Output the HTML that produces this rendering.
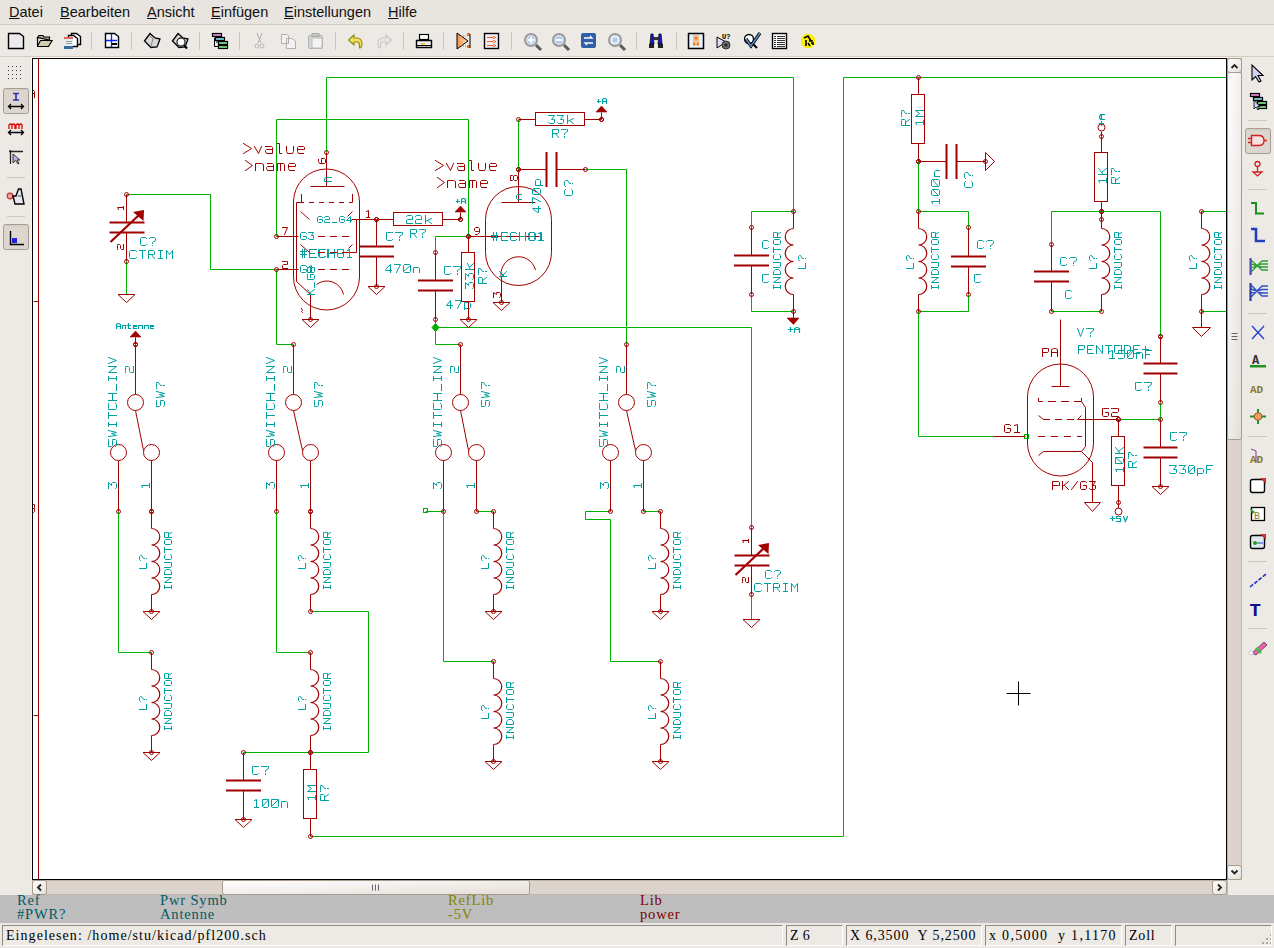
<!DOCTYPE html>
<html><head><meta charset="utf-8">
<style>
*{margin:0;padding:0;box-sizing:border-box}
html,body{width:1274px;height:948px;overflow:hidden;background:#EDEAE6;font-family:"Liberation Sans",sans-serif;position:relative}
.abs{position:absolute}
#menubar{left:0;top:0;width:1274px;height:24px;background:#E8E4DF}
#menubar span{position:absolute;top:4px;line-height:17px;font-size:14.5px;color:#101010;white-space:pre}
#menubar u{text-decoration:underline;text-underline-offset:1px;text-decoration-thickness:1px}
#canvas{left:32px;top:58px;width:1195px;height:822px;background:#fff;border:1px solid #000}
#info{left:0;top:895px;width:1274px;height:28px;background:#BEBEBE;font-family:"Liberation Serif",serif;font-size:14.5px;line-height:14px;letter-spacing:0.85px}
#info div{position:absolute;white-space:pre}
#status{left:0;top:923px;width:1274px;height:25px;background:transparent;font-family:"Liberation Serif",serif;font-size:14px;color:#000;letter-spacing:1.05px}
.fld{position:absolute;top:2px;height:21px;border-top:1px solid #8F8A84;border-left:1px solid #8F8A84;border-right:1px solid #fff;border-bottom:1px solid #fff;padding-left:3px;line-height:20px;white-space:pre;overflow:hidden}
svg text{font-family:"Liberation Mono",monospace}
</style></head><body>
<div id="menubar" class="abs">
<span style="left:9px"><u>D</u>atei</span>
<span style="left:60px"><u>B</u>earbeiten</span>
<span style="left:147px"><u>A</u>nsicht</span>
<span style="left:211px"><u>E</u>infügen</span>
<span style="left:284px"><u>E</u>instellungen</span>
<span style="left:388px"><u>H</u>ilfe</span>
</div>
<div id="canvas" class="abs"></div>
<svg class="abs" style="left:0;top:0" width="1274" height="948" viewBox="0 0 1274 948">
<defs><clipPath id="cv"><rect x="33" y="59" width="1193" height="820"/></clipPath></defs>
<rect x="0" y="24" width="1274" height="1" fill="#D3CAC1"/>
<rect x="0" y="56" width="1274" height="1" fill="#D6CDC4"/>
<rect x="31" y="57" width="1197" height="1" fill="#FAF7F2"/><rect x="31" y="57" width="1" height="824" fill="#FAF7F2"/>
<path d="M8.5,33.5 H19.5 L23.5,36.5 V48.5 H8.5 Z" fill="#EBEBEB" stroke="#000" stroke-width="1.4"/>
<path d="M37.5,37.5 L39,35.5 H43 L44,37 H49.5 V40 Z" fill="#A9AE90" stroke="#000" stroke-width="1.2"/>
<path d="M37.5,37.5 V46.5 H48.5 L52,40.5 H40.5 L37.5,46" fill="#CDD1AC" stroke="#000" stroke-width="1.2"/>
<path d="M71.5,33.5 H76.5 L80.5,36.5 V44.5 H71.5 Z" fill="#fff" stroke="#000" stroke-width="1.4"/>
<path d="M68.5,35.5 H73.5 L77.5,38.5 V46.5 H68.5 Z" fill="#fff" stroke="#000" stroke-width="1.4"/>
<rect x="64" y="37" width="9" height="12" fill="#E9EEF5"/><rect x="64" y="37" width="9" height="2" fill="#E06a5a"/><rect x="64" y="46" width="9" height="3" fill="#3a6a9a"/><rect x="66" y="41" width="6" height="1" fill="#999"/><rect x="66" y="43" width="6" height="1" fill="#999"/>
<rect x="91" y="32" width="1" height="18" fill="#CFC6BC"/>
<path d="M105.5,33.5 H114.5 L118.5,36.5 V47.5 H105.5 Z" fill="#fff" stroke="#000" stroke-width="1.4"/>
<path d="M106,40.5 H117 M111.5,34 V47" stroke="#0022ff" stroke-width="1.3"/><rect x="112" y="43" width="5" height="2" fill="#000"/>
<rect x="131" y="32" width="1" height="18" fill="#CFC6BC"/>
<path d="M144.5,41 L150,33.5 L155,38 L160,39 L157,47 L151,47.5 Z" fill="#D8D8D8" stroke="#000" stroke-width="1.3"/>
<path d="M150,36 L153,39 L151,46" stroke="#888" fill="none"/>
<path d="M172.5,41 L178,33.5 L183,38 L188,39 L185,47 L179,47.5 Z" fill="#D8D8D8" stroke="#000" stroke-width="1.3"/>
<line x1="183" y1="44" x2="187" y2="48.5" stroke="#000" stroke-width="2.2"/><circle cx="181" cy="42" r="4" fill="#fff" stroke="#333" stroke-width="1.3"/>
<rect x="199" y="32" width="1" height="18" fill="#CFC6BC"/>
<path d="M214.5,38 V46.5 H219 M216,42 H219" stroke="#000" fill="none"/>
<rect x="212.5" y="33.5" width="9" height="3" fill="#E08AD8" stroke="#000" stroke-width="1.2"/>
<rect x="215.5" y="37.5" width="9" height="3" fill="#7FCFD8" stroke="#000" stroke-width="1.2"/>
<rect x="218.5" y="41.5" width="9" height="3" fill="#7ED67E" stroke="#000" stroke-width="1.2"/>
<rect x="218.5" y="45.5" width="9" height="3" fill="#7ED67E" stroke="#000" stroke-width="1.2"/>
<rect x="239" y="32" width="1" height="18" fill="#CFC6BC"/>
<path d="M257,33 L261,43 M262,33 L258,43" stroke="#B8B8B8" stroke-width="1.1"/><circle cx="257" cy="46" r="2" fill="none" stroke="#B8B8B8"/><circle cx="262" cy="46" r="2" fill="none" stroke="#B8B8B8"/>
<path d="M281.5,34.5 H287 L288.5,36 V43.5 H281.5 Z M286.5,38.5 H292 L295.5,41 V48.5 H286.5 Z" fill="#F2F2F2" stroke="#B0B0B0"/>
<rect x="308.5" y="35.5" width="14" height="13" rx="1" fill="#D5D5D5" stroke="#B0B0B0"/><rect x="312" y="38" width="10" height="10" fill="#F4F4F4" stroke="#BDBDBD"/><rect x="312" y="33.5" width="7" height="3" fill="#C8C8C8" stroke="#AAA"/>
<rect x="335" y="32" width="1" height="18" fill="#CFC6BC"/>
<path d="M354,35 L348.5,40 L354,45 V42 H357 Q359.5,42 359.5,45 V48 Q362,48 362,44 Q362,38 357,38 H354 Z" fill="#F2E05A" stroke="#8E8A10" stroke-width="1.1"/>
<path d="M386,35 L391.5,40 L386,45 V42 H383 Q380.5,42 380.5,45 V48 Q378,48 378,44 Q378,38 383,38 H386 Z" fill="#E6E6E6" stroke="#C8C8C8" stroke-width="1.1"/>
<rect x="403" y="32" width="1" height="18" fill="#CFC6BC"/>
<rect x="419.5" y="34.5" width="9" height="5" fill="#fff" stroke="#000" stroke-width="1.2"/><path d="M416.5,40.5 H431.5 V47.5 H416.5 Z" fill="#EEE" stroke="#000" stroke-width="1.4"/><rect x="421" y="43" width="4" height="1.5" fill="#ddd000"/><line x1="417" y1="45.5" x2="431" y2="45.5" stroke="#000"/>
<rect x="443" y="32" width="1" height="18" fill="#CFC6BC"/>
<defs><linearGradient id="og" x1="0" x2="1"><stop offset="0" stop-color="#F59040"/><stop offset="1" stop-color="#FFE0C0"/></linearGradient></defs>
<path d="M457,33 L468,41 L457,49 Z" fill="url(#og)" stroke="#000" stroke-width="1"/>
<rect x="467" y="33" width="3" height="3" fill="#F07020"/><rect x="467" y="45" width="3" height="3" fill="#F07020"/><path d="M470,34 V48" stroke="#000" stroke-width="1"/><path d="M461,36 H467 M461,46 H467" stroke="#F07020" stroke-dasharray="1,1"/>
<rect x="484.5" y="33.5" width="14" height="15" fill="#F4EEF8" stroke="#000" stroke-width="1.4"/>
<path d="M487,37.5 H496" stroke="#F06020" stroke-width="1"/><circle cx="494" cy="37.5" r="1.1" fill="#fff" stroke="#F06020" stroke-width="0.8"/>
<path d="M487,41.5 H496" stroke="#F06020" stroke-width="1"/><circle cx="494" cy="41.5" r="1.1" fill="#fff" stroke="#F06020" stroke-width="0.8"/>
<path d="M487,45.5 H496" stroke="#F06020" stroke-width="1"/><circle cx="494" cy="45.5" r="1.1" fill="#fff" stroke="#F06020" stroke-width="0.8"/>
<rect x="511" y="32" width="1" height="18" fill="#CFC6BC"/>
<line x1="536" y1="45" x2="541" y2="50" stroke="#5a5a5a" stroke-width="3"/>
<circle cx="531" cy="40" r="6" fill="#D5E2F2" stroke="#9a9a9a" stroke-width="2"/>
<circle cx="531" cy="40" r="3.5" fill="#B4C9EA"/>
<path d="M528,40 H534 M531,37 V43" stroke="#fff" stroke-width="2"/>
<line x1="564" y1="45" x2="569" y2="50" stroke="#5a5a5a" stroke-width="3"/>
<circle cx="559" cy="40" r="6" fill="#D5E2F2" stroke="#9a9a9a" stroke-width="2"/>
<circle cx="559" cy="40" r="3.5" fill="#B4C9EA"/>
<path d="M556,40 H562" stroke="#fff" stroke-width="2"/>
<rect x="581" y="33" width="15" height="15" rx="2" fill="#2F5FA8"/><path d="M584,38 H592 L590,36 M593,43 H585 L587,45" stroke="#fff" stroke-width="1.3" fill="none"/>
<line x1="620" y1="45" x2="625" y2="50" stroke="#5a5a5a" stroke-width="3"/>
<circle cx="615" cy="40" r="6" fill="#D5E2F2" stroke="#9a9a9a" stroke-width="2"/>
<circle cx="615" cy="40" r="3.5" fill="#B4C9EA"/>
<rect x="612" y="37" width="6" height="6" fill="none" stroke="#fff" stroke-width="1"/>
<rect x="636" y="32" width="1" height="18" fill="#CFC6BC"/>
<rect x="649" y="44" width="5" height="4" fill="#222"/><rect x="658" y="44" width="5" height="4" fill="#222"/><path d="M650,44 L651,34 H653 L654,44 Z M658,44 L659,34 H661 L662,44 Z" fill="#1a1aD0" stroke="#000" stroke-width="0.8"/><rect x="654" y="37" width="4" height="3" fill="#333"/>
<rect x="676" y="32" width="1" height="18" fill="#CFC6BC"/>
<rect x="688.5" y="33.5" width="15" height="15" fill="#E4F0FA" stroke="#000" stroke-width="1.5"/><rect x="693" y="35" width="6" height="11" fill="#F5C090"/><circle cx="696" cy="38" r="1.5" fill="#F07020"/><circle cx="694" cy="44" r="1.2" fill="#F07020"/><circle cx="698" cy="44" r="1.2" fill="#F07020"/>
<path d="M717,37 L726,42 L717,48 Z" fill="#DCDCF8" stroke="#000" stroke-width="1"/><circle cx="726" cy="45" r="4" fill="#6a6a6a" stroke="#333"/><circle cx="726" cy="45" r="1.5" fill="#222"/><text x="722" y="39" font-size="7" font-family="Liberation Sans" font-weight="bold" fill="#000">U?</text>
<circle cx="749" cy="39" r="4.5" fill="#fff" stroke="#000" stroke-width="1.3"/><path d="M746,39 L751,46 L760,33" stroke="#000" stroke-width="3.2" fill="none"/><path d="M746,39 L751,46 L760,33" stroke="#5A8AD0" stroke-width="1.6" fill="none"/><line x1="753" y1="44" x2="757" y2="48" stroke="#000" stroke-width="2"/>
<rect x="772.5" y="33.5" width="14" height="15" fill="#fff" stroke="#000" stroke-width="1.4"/>
<path d="M774,36.5 H776 M777,36.5 H785" stroke="#000" stroke-width="0.8"/>
<path d="M774,38.5 H776 M777,38.5 H785" stroke="#000" stroke-width="0.8"/>
<path d="M774,40.5 H776 M777,40.5 H785" stroke="#000" stroke-width="0.8"/>
<path d="M774,42.5 H776 M777,42.5 H785" stroke="#000" stroke-width="0.8"/>
<path d="M774,44.5 H776 M777,44.5 H785" stroke="#000" stroke-width="0.8"/>
<path d="M774,46.5 H776 M777,46.5 H785" stroke="#000" stroke-width="0.8"/>
<path d="M805,34 H811 L815,38 V44 L811,48 H805 L801,44 V38 Z" fill="#FFF000"/><path d="M804,38 L808,36 L811,41 M806,40 V46 M808,43 L810,46 M809,41 L813,41 M811,43 H813 V45" stroke="#000" stroke-width="1.6" fill="none"/>
<rect x="8" y="66" width="1" height="1" fill="#404040"/>
<rect x="12" y="66" width="1" height="1" fill="#404040"/>
<rect x="16" y="66" width="1" height="1" fill="#404040"/>
<rect x="20" y="66" width="1" height="1" fill="#404040"/>
<rect x="8" y="70" width="1" height="1" fill="#404040"/>
<rect x="12" y="70" width="1" height="1" fill="#404040"/>
<rect x="16" y="70" width="1" height="1" fill="#404040"/>
<rect x="20" y="70" width="1" height="1" fill="#404040"/>
<rect x="8" y="74" width="1" height="1" fill="#404040"/>
<rect x="12" y="74" width="1" height="1" fill="#404040"/>
<rect x="16" y="74" width="1" height="1" fill="#404040"/>
<rect x="20" y="74" width="1" height="1" fill="#404040"/>
<rect x="8" y="78" width="1" height="1" fill="#404040"/>
<rect x="12" y="78" width="1" height="1" fill="#404040"/>
<rect x="16" y="78" width="1" height="1" fill="#404040"/>
<rect x="20" y="78" width="1" height="1" fill="#404040"/>
<rect x="3.5" y="88.5" width="25" height="25" rx="2" fill="#DCD6CF" stroke="#A59C92"/>
<rect x="4.5" y="89.5" width="23" height="1" fill="#CFC8C0"/>
<path d="M13,93.5 H19 M16,93.5 V100 M13,100 H19" stroke="#3030B0" stroke-width="1.6"/><path d="M9,106.5 H23 M11,104 L8.5,106.5 L11,109 M21,104 L23.5,106.5 L21,109" stroke="#000" stroke-width="1.3" fill="none"/>
<path d="M9,129 V125 Q11,123 12,125 V129 M12,125 Q14,123 15,125 V129 M16,129 V125 Q18,123 19,125 V129 M19,125 Q21,123 22,125 V129" stroke="#E00000" stroke-width="1.3" fill="none"/><path d="M9,132.5 H23 M11,130 L8.5,132.5 L11,135 M21,130 L23.5,132.5 L21,135" stroke="#000" stroke-width="1.3" fill="none"/>
<path d="M9,151.5 H23 M10.5,150 V164" stroke="#222" stroke-width="1.3"/><path d="M13,154 L13,163 L15.5,160.5 L18,164 L19,163.5 L17,160 L20,160 Z" fill="#B8B8E8" stroke="#222" stroke-width="0.9"/>
<rect x="7" y="177" width="18" height="1" fill="#CFC6BC"/>
<circle cx="10" cy="196" r="2.8" fill="#F4A0A0" stroke="#C03030" stroke-width="1.2"/><path d="M13,196 H16 L18.5,189 H21 L24,204 H15 Z" fill="#E8E8F0" stroke="#000" stroke-width="1.4"/><path d="M18,196 L21,196" stroke="#444"/>
<rect x="7" y="216" width="18" height="1" fill="#CFC6BC"/>
<rect x="3.5" y="224.5" width="25" height="25" rx="2" fill="#DCD6CF" stroke="#A59C92"/>
<rect x="4.5" y="225.5" width="23" height="1" fill="#CFC8C0"/>
<path d="M10.5,231 V244.5 H24" stroke="#000" stroke-width="1.4" fill="none"/><rect x="12" y="238" width="5" height="5" fill="#2020E0"/>
<path d="M1252,65 L1252,80 L1255.5,76.5 L1259,82 L1261,81 L1258,75.5 L1263,75.5 Z" fill="#D0D0F8" stroke="#000" stroke-width="1.1"/>
<rect x="1250.5" y="93.5" width="9" height="3" fill="#E08AD8" stroke="#000" stroke-width="1.2"/>
<rect x="1253.5" y="97.5" width="9" height="3" fill="#7FCFD8" stroke="#000" stroke-width="1.2"/>
<rect x="1257.5" y="101.5" width="9" height="3" fill="#7ED67E" stroke="#000" stroke-width="1.2"/>
<rect x="1257.5" y="105.5" width="9" height="3" fill="#7ED67E" stroke="#000" stroke-width="1.2"/>
<path d="M1254,100 L1254,109 L1256,107 L1258,110 L1259,109 L1257.5,106.5 L1260,106.5 Z" fill="#D0D0F8" stroke="#000" stroke-width="0.8"/>
<rect x="1248" y="120" width="19" height="1" fill="#CFC6BC"/>
<rect x="1245.5" y="128.5" width="25" height="25" rx="2" fill="#DCD6CF" stroke="#A59C92"/>
<rect x="1246.5" y="129.5" width="23" height="1" fill="#CFC8C0"/>
<path d="M1251.5,135.5 H1259 Q1264,135.5 1264,140.5 Q1264,145.5 1259,145.5 H1251.5 Z M1248,138.5 H1251.5 M1248,142.5 H1251.5 M1264,140.5 H1267" stroke="#D02020" stroke-width="1.4" fill="#F8E0E0"/>
<circle cx="1257.5" cy="164" r="2.5" fill="none" stroke="#D02020" stroke-width="1.3"/><path d="M1257.5,166.5 V172 M1253,172 H1262 L1257.5,176 Z" stroke="#D02020" stroke-width="1.3" fill="none"/>
<rect x="1248" y="189" width="19" height="1" fill="#CFC6BC"/>
<path d="M1251,203 H1256 V213.5 H1264" stroke="#189018" stroke-width="2" fill="none"/>
<path d="M1251,229 H1256 V241 H1265" stroke="#2040C0" stroke-width="2.6" fill="none"/>
<path d="M1251,260 V274 M1251,272 L1262,261 H1268 M1251,268 L1262,264 H1268 M1251,264 L1262,267 H1268 M1251,260 L1262,270 H1268" stroke="#30A030" stroke-width="1.3" fill="none"/><path d="M1250.5,258 V275" stroke="#5050C0" stroke-width="2.2"/>
<path d="M1251,297 L1262,286 H1268 M1251,293 L1262,289.5 H1268 M1251,289 L1262,293 H1268 M1251,285 L1262,296 H1268" stroke="#3050C8" stroke-width="1.5" fill="none"/><path d="M1250.5,283 V301" stroke="#3040A0" stroke-width="2.2"/>
<rect x="1248" y="313" width="19" height="1" fill="#CFC6BC"/>
<path d="M1252,326 L1264,339 M1264,326 L1252,339" stroke="#2040D0" stroke-width="1.3"/>
<text x="1252" y="364" font-size="12" font-weight="bold" font-family="Liberation Sans" fill="#303030">A</text><rect x="1250" y="365" width="16" height="2.5" fill="#209020"/>
<text x="1250" y="393" font-size="11" font-weight="bold" font-family="Liberation Sans" fill="#8A7A30">AD</text>
<path d="M1258,409 V424 M1250,416.5 H1266" stroke="#209020" stroke-width="2"/><circle cx="1258" cy="416.5" r="3.8" fill="#F0A060" stroke="#A05020"/>
<rect x="1248" y="436" width="19" height="1" fill="#CFC6BC"/>
<text x="1250" y="463" font-size="11" font-weight="bold" font-family="Liberation Sans" fill="#8A7A30">AD</text><path d="M1251,449 L1256,451 L1256,462" stroke="#9030A0" fill="none"/>
<rect x="1250.5" y="479.5" width="14" height="13" rx="2" fill="#fff" stroke="#000" stroke-width="1.4"/><path d="M1260,478 L1266,478 L1266,484 Z" fill="#D03030"/>
<rect x="1251.5" y="507.5" width="13" height="13" fill="#fff" stroke="#000" stroke-width="1.3"/><text x="1254" y="519" font-size="10" font-family="Liberation Sans" fill="#8A7A30">B</text><path d="M1250,508 L1255,512 L1252,514 Z" fill="#20A020"/>
<rect x="1250.5" y="535.5" width="14" height="13" rx="2" fill="#E0E8F0" stroke="#000" stroke-width="1.4"/><circle cx="1255" cy="543" r="2" fill="#20A020"/><path d="M1257,543 H1263" stroke="#2040D0"/><path d="M1260,534 L1266,534 L1266,540 Z" fill="#D03030"/>
<rect x="1248" y="561" width="19" height="1" fill="#CFC6BC"/>
<path d="M1250,587 L1266,574" stroke="#2030C0" stroke-width="1.6" stroke-dasharray="4,1.5"/>
<text x="1249.5" y="616" font-size="19" font-weight="bold" font-family="Liberation Serif" fill="#10108A">T</text>
<rect x="1248" y="628" width="19" height="1" fill="#CFC6BC"/>
<path d="M1252,653 L1264,642 L1267,645 L1256,655 Z" fill="#F060B0" stroke="#444" stroke-width="0.8"/><path d="M1256,648 L1261,653" stroke="#40C040" stroke-width="2.5"/><circle cx="1251" cy="653" r="2" fill="#fff" stroke="#ccc"/>
<defs><linearGradient id="vb" x1="0" y1="0" x2="1" y2="1"><stop offset="0" stop-color="#FFFFFF"/><stop offset="1" stop-color="#E4DED8"/></linearGradient></defs>
<rect x="1227.5" y="58.5" width="14" height="821" fill="#DCD4CC" stroke="#C2B6AA"/>
<rect x="1227.5" y="72.5" width="14" height="367" rx="2" fill="url(#vb)" stroke="#A89A8C"/>
<rect x="1227.5" y="58.5" width="14" height="14" rx="2.5" fill="url(#vb)" stroke="#A89A8C"/>
<path d="M1231.5,68 L1234.5,65 L1237.5,68" stroke="#222" stroke-width="1.8" fill="none"/>
<path d="M1231.5,333.5 H1237.5 M1231.5,336.5 H1237.5 M1231.5,339.5 H1237.5" stroke="#666" stroke-width="1"/>
<rect x="1227.5" y="865.5" width="14" height="14" rx="2.5" fill="url(#vb)" stroke="#A89A8C"/>
<path d="M1231.5,870.5 L1234.5,873.5 L1237.5,870.5" stroke="#222" stroke-width="1.8" fill="none"/>
<rect x="32.5" y="880.5" width="1195" height="14" fill="#DCD4CC" stroke="#C2B6AA"/>
<rect x="32.5" y="880.5" width="14" height="14" rx="2.5" fill="url(#vb)" stroke="#A89A8C"/>
<path d="M41,884.5 L38,887.5 L41,890.5" stroke="#222" stroke-width="1.8" fill="none"/>
<rect x="222.5" y="880.5" width="307" height="14" rx="2" fill="url(#vb)" stroke="#A89A8C"/>
<path d="M372.5,884.5 V890.5 M375.5,884.5 V890.5 M378.5,884.5 V890.5" stroke="#666"/>
<rect x="1212.5" y="880.5" width="14" height="14" rx="2.5" fill="url(#vb)" stroke="#A89A8C"/>
<path d="M1218,884.5 L1221,887.5 L1218,890.5" stroke="#222" stroke-width="1.8" fill="none"/>
<rect x="1270" y="934" width="2" height="2" fill="#B0A89F"/>
<rect x="1266" y="938" width="2" height="2" fill="#B0A89F"/>
<rect x="1270" y="938" width="2" height="2" fill="#B0A89F"/>
<rect x="1262" y="942" width="2" height="2" fill="#B0A89F"/>
<rect x="1266" y="942" width="2" height="2" fill="#B0A89F"/>
<rect x="1270" y="942" width="2" height="2" fill="#B0A89F"/>
<g clip-path="url(#cv)">
<line x1="38.5" y1="58.5" x2="38.5" y2="879.5" stroke="#A00000" stroke-width="1"/>
<line x1="33.5" y1="301.5" x2="38.5" y2="301.5" stroke="#A00000" stroke-width="1"/>
<line x1="33.5" y1="715.5" x2="38.5" y2="715.5" stroke="#A00000" stroke-width="1"/>
<path d="M28.5,97.5 L28.5,91.5 L30.5,89.5 L32.5,89.5 L34.5,91.5 L34.5,97.5 M28.5,93.5 L34.5,93.5" stroke="#A00000" stroke-width="1" fill="none" stroke-linecap="square" stroke-linejoin="miter"/>
<path d="M28.5,512.5 L28.5,504.5 L33.5,504.5 L34.5,504.5 L34.5,507.5 L33.5,508.5 L28.5,508.5 M33.5,508.5 L34.5,508.5 L34.5,511.5 L33.5,512.5 L28.5,512.5" stroke="#A00000" stroke-width="1" fill="none" stroke-linecap="square" stroke-linejoin="miter"/>
<path d="M326.5,152.5 L326.5,77.5 L793.5,77.5 L793.5,211.5 L751.5,211.5 L751.5,227.5" stroke="#00B000" stroke-width="1" fill="none"/>
<path d="M468.5,236.5 L468.5,119.5 L276.5,119.5 L276.5,236.5" stroke="#00B000" stroke-width="1" fill="none"/>
<path d="M276.5,269.5 L276.5,344.5 L293.5,344.5" stroke="#00B000" stroke-width="1" fill="none"/>
<path d="M126.5,194.5 L210.5,194.5 L210.5,269.5 L276.5,269.5" stroke="#00B000" stroke-width="1" fill="none"/>
<path d="M126.5,261.5 L126.5,294.5" stroke="#00B000" stroke-width="1" fill="none"/>
<path d="M468.5,236.5 L435.5,236.5 L435.5,252.5" stroke="#00B000" stroke-width="1" fill="none"/>
<path d="M518.5,119.5 L518.5,169.5" stroke="#00B000" stroke-width="1" fill="none"/>
<path d="M585.5,169.5 L626.5,169.5 L626.5,344.5" stroke="#00B000" stroke-width="1" fill="none"/>
<path d="M435.5,319.5 L435.5,344.5 L460.5,344.5" stroke="#00B000" stroke-width="1" fill="none"/>
<path d="M435.5,327.5 L751.5,327.5 L751.5,527.5" stroke="#00B000" stroke-width="1" fill="none"/>
<path d="M751.5,594.5 L751.5,619.5" stroke="#00B000" stroke-width="1" fill="none"/>
<path d="M1226.5,77.5 L843.5,77.5 L843.5,836.5 L310.5,836.5" stroke="#00B000" stroke-width="1" fill="none"/>
<path d="M918.5,161.5 L918.5,211.5 L968.5,211.5 L968.5,227.5" stroke="#00B000" stroke-width="1" fill="none"/>
<path d="M751.5,294.5 L751.5,311.5 L793.5,311.5" stroke="#00B000" stroke-width="1" fill="none"/>
<path d="M968.5,294.5 L968.5,311.5 L918.5,311.5 L918.5,436.5 L993.5,436.5" stroke="#00B000" stroke-width="1" fill="none"/>
<path d="M1051.5,244.5 L1051.5,211.5 L1160.5,211.5 L1160.5,336.5" stroke="#00B000" stroke-width="1" fill="none"/>
<path d="M1051.5,311.5 L1101.5,311.5" stroke="#00B000" stroke-width="1" fill="none"/>
<path d="M1201.5,211.5 L1226.5,211.5" stroke="#00B000" stroke-width="1" fill="none"/>
<path d="M1201.5,311.5 L1226.5,311.5" stroke="#00B000" stroke-width="1" fill="none"/>
<path d="M1160.5,402.5 L1160.5,419.5" stroke="#00B000" stroke-width="1" fill="none"/>
<path d="M1118.5,419.5 L1160.5,419.5" stroke="#00B000" stroke-width="1" fill="none"/>
<path d="M118.5,511.5 L118.5,652.5 L151.5,652.5" stroke="#00B000" stroke-width="1" fill="none"/>
<path d="M276.5,511.5 L276.5,652.5 L310.5,652.5" stroke="#00B000" stroke-width="1" fill="none"/>
<path d="M310.5,611.5 L368.5,611.5 L368.5,752.5 L243.5,752.5" stroke="#00B000" stroke-width="1" fill="none"/>
<path d="M425.5,511.5 L443.5,511.5 L443.5,661.5 L493.5,661.5" stroke="#00B000" stroke-width="1" fill="none"/>
<path d="M476.5,511.5 L493.5,511.5" stroke="#00B000" stroke-width="1" fill="none"/>
<path d="M610.5,511.5 L585.5,511.5 L585.5,519.5 L610.5,519.5 L610.5,661.5 L660.5,661.5" stroke="#00B000" stroke-width="1" fill="none"/>
<path d="M643.5,511.5 L660.5,511.5" stroke="#00B000" stroke-width="1" fill="none"/>
<rect x="423.5" y="508.5" width="4" height="4" stroke="#00B000" fill="none"/>
<rect x="1024.5" y="434.5" width="4" height="4" stroke="#00B000" fill="none"/>
<path d="M435.5,323.5 L439,327.5 L435.5,331.5 L432,327.5 Z" fill="#00B000" stroke="#00B000"/>
<circle cx="126.5" cy="194.5" r="2.0" stroke="#A00000" stroke-width="1" fill="none"/>
<circle cx="126.5" cy="261.5" r="2.0" stroke="#A00000" stroke-width="1" fill="none"/>
<line x1="126.5" y1="194.5" x2="126.5" y2="222.5" stroke="#A00000" stroke-width="1"/>
<line x1="126.5" y1="232.5" x2="126.5" y2="261.5" stroke="#A00000" stroke-width="1"/>
<rect x="109.5" y="221.5" width="35" height="2" fill="#A00000"/>
<rect x="109.5" y="231.5" width="35" height="2" fill="#A00000"/>
<line x1="110.5" y1="242" x2="139" y2="215" stroke="#A00000" stroke-width="2.2"/>
<path d="M144,210 L143.5,221 L133,212 Z" fill="#A00000"/>
<path d="M118.5,209.5 L117.5,207.5 L123.5,207.5 M123.5,209.5 L123.5,206.5" stroke="#A00000" stroke-width="1" fill="none" stroke-linecap="square" stroke-linejoin="miter"/>
<path d="M117.5,249.5 L117.5,248.5 L117.5,245.5 L117.5,244.5 L119.5,244.5 L120.5,245.5 L120.5,248.5 L121.5,249.5 L123.5,249.5 L123.5,244.5" stroke="#A00000" stroke-width="1" fill="none" stroke-linecap="square" stroke-linejoin="miter"/>
<path d="M146.5,238.5 L145.5,237.5 L141.5,237.5 L140.5,238.5 L140.5,244.5 L141.5,245.5 L145.5,245.5 L146.5,244.5 M149.5,238.5 L150.5,237.5 L154.5,237.5 L155.5,238.5 L155.5,240.5 L152.5,242.5 L152.5,243.5 M152.5,245.5 L152.5,245.5" stroke="#00A0A0" stroke-width="1" fill="none" stroke-linecap="square" stroke-linejoin="miter"/>
<path d="M136.5,251.5 L135.5,250.5 L130.5,250.5 L129.5,251.5 L129.5,257.5 L130.5,258.5 L135.5,258.5 L136.5,257.5 M139.5,250.5 L145.5,250.5 M142.5,250.5 L142.5,258.5 M148.5,258.5 L148.5,250.5 L153.5,250.5 L154.5,251.5 L154.5,254.5 L153.5,254.5 L148.5,254.5 M151.5,254.5 L154.5,258.5 M158.5,250.5 L162.5,250.5 M160.5,250.5 L160.5,258.5 M158.5,258.5 L162.5,258.5 M166.5,258.5 L166.5,250.5 L169.5,254.5 L172.5,250.5 L172.5,258.5" stroke="#00A0A0" stroke-width="1" fill="none" stroke-linecap="square" stroke-linejoin="miter"/>
<path d="M118.0,294.5 L135.0,294.5 L126.5,302.5 Z" stroke="#A00000" stroke-width="1" fill="none"/>
<circle cx="751.5" cy="527.5" r="2.0" stroke="#A00000" stroke-width="1" fill="none"/>
<circle cx="751.5" cy="594.5" r="2.0" stroke="#A00000" stroke-width="1" fill="none"/>
<line x1="751.5" y1="527.5" x2="751.5" y2="555.5" stroke="#A00000" stroke-width="1"/>
<line x1="751.5" y1="565.5" x2="751.5" y2="594.5" stroke="#A00000" stroke-width="1"/>
<rect x="734.5" y="554.5" width="35" height="2" fill="#A00000"/>
<rect x="734.5" y="564.5" width="35" height="2" fill="#A00000"/>
<line x1="735.5" y1="575" x2="764" y2="548" stroke="#A00000" stroke-width="2.2"/>
<path d="M769,543 L768.5,554 L758,545 Z" fill="#A00000"/>
<path d="M743.5,542.5 L742.5,540.5 L748.5,540.5 M748.5,542.5 L748.5,539.5" stroke="#A00000" stroke-width="1" fill="none" stroke-linecap="square" stroke-linejoin="miter"/>
<path d="M742.5,582.5 L742.5,581.5 L742.5,578.5 L742.5,577.5 L744.5,577.5 L745.5,578.5 L745.5,581.5 L746.5,582.5 L748.5,582.5 L748.5,577.5" stroke="#A00000" stroke-width="1" fill="none" stroke-linecap="square" stroke-linejoin="miter"/>
<path d="M771.5,571.5 L770.5,570.5 L766.5,570.5 L765.5,571.5 L765.5,577.5 L766.5,578.5 L770.5,578.5 L771.5,577.5 M774.5,571.5 L775.5,570.5 L779.5,570.5 L780.5,571.5 L780.5,573.5 L777.5,575.5 L777.5,576.5 M777.5,578.5 L777.5,578.5" stroke="#00A0A0" stroke-width="1" fill="none" stroke-linecap="square" stroke-linejoin="miter"/>
<path d="M761.5,584.5 L760.5,583.5 L755.5,583.5 L754.5,584.5 L754.5,590.5 L755.5,591.5 L760.5,591.5 L761.5,590.5 M764.5,583.5 L770.5,583.5 M767.5,583.5 L767.5,591.5 M773.5,591.5 L773.5,583.5 L778.5,583.5 L779.5,584.5 L779.5,587.5 L778.5,587.5 L773.5,587.5 M776.5,587.5 L779.5,591.5 M783.5,583.5 L787.5,583.5 M785.5,583.5 L785.5,591.5 M783.5,591.5 L787.5,591.5 M791.5,591.5 L791.5,583.5 L794.5,587.5 L797.5,583.5 L797.5,591.5" stroke="#00A0A0" stroke-width="1" fill="none" stroke-linecap="square" stroke-linejoin="miter"/>
<path d="M743.0,619.5 L760.0,619.5 L751.5,627.5 Z" stroke="#A00000" stroke-width="1" fill="none"/>
<circle cx="135.5" cy="344.5" r="2.0" stroke="#A00000" stroke-width="1" fill="none"/>
<line x1="135.5" y1="344.5" x2="135.5" y2="337.5" stroke="#A00000" stroke-width="1"/>
<path d="M135.5,331 L141,337 L130,337 Z" fill="#A00000" stroke="#A00000" stroke-width="0.6"/>
<path d="" stroke="#00A0A0" stroke-width="1.2" fill="none" stroke-linecap="square" stroke-linejoin="miter"/>
<path d="M116.5,328.5 L116.5,324.5 L117.5,323.5 L118.5,323.5 L120.5,324.5 L120.5,328.5 M116.5,326.5 L120.5,326.5 M122.5,328.5 L122.5,325.5 L125.5,325.5 L125.5,325.5 L125.5,328.5 M128.5,323.5 L128.5,328.5 L129.5,328.5 L130.5,328.5 M127.5,325.5 L130.5,325.5 M133.5,326.5 L136.5,326.5 L136.5,325.5 L136.5,325.5 L133.5,325.5 L133.5,325.5 L133.5,328.5 L133.5,328.5 L136.5,328.5 M138.5,328.5 L138.5,325.5 L141.5,325.5 L142.5,325.5 L142.5,328.5 M144.5,328.5 L144.5,325.5 L147.5,325.5 L148.5,325.5 L148.5,328.5 M150.5,326.5 L153.5,326.5 L153.5,325.5 L153.5,325.5 L150.5,325.5 L150.5,325.5 L150.5,328.5 L150.5,328.5 L153.5,328.5" stroke="#00A0A0" stroke-width="1.2" fill="none" stroke-linecap="square" stroke-linejoin="miter"/>
<circle cx="135.5" cy="344.5" r="2.0" stroke="#A00000" stroke-width="1" fill="none"/>
<line x1="135.5" y1="344.5" x2="135.5" y2="394.5" stroke="#A00000" stroke-width="1"/>
<circle cx="135.5" cy="402.5" r="8" stroke="#A00000" stroke-width="1" fill="none"/>
<circle cx="118.5" cy="452.5" r="8" stroke="#A00000" stroke-width="1" fill="none"/>
<circle cx="151.5" cy="452.5" r="8" stroke="#A00000" stroke-width="1" fill="none"/>
<line x1="135.5" y1="410.5" x2="143.5" y2="450.5" stroke="#A00000" stroke-width="1"/>
<line x1="118.5" y1="460.5" x2="118.5" y2="511.5" stroke="#A00000" stroke-width="1"/>
<line x1="151.5" y1="460.5" x2="151.5" y2="511.5" stroke="#A00000" stroke-width="1"/>
<circle cx="118.5" cy="511.5" r="2.0" stroke="#A00000" stroke-width="1" fill="none"/>
<circle cx="151.5" cy="511.5" r="2.0" stroke="#A00000" stroke-width="1" fill="none"/>
<path d="M108.5,439.5 L108.5,440.5 L108.5,445.5 L108.5,446.5 L111.5,446.5 L112.5,445.5 L112.5,440.5 L112.5,439.5 L115.5,439.5 L116.5,440.5 L116.5,445.5 L115.5,446.5 M108.5,436.5 L116.5,435.5 L111.5,433.5 L116.5,432.5 L108.5,430.5 M108.5,426.5 L108.5,422.5 M108.5,424.5 L116.5,424.5 M116.5,426.5 L116.5,422.5 M108.5,418.5 L108.5,412.5 M108.5,415.5 L116.5,415.5 M108.5,403.5 L108.5,404.5 L108.5,408.5 L108.5,409.5 L115.5,409.5 L116.5,408.5 L116.5,404.5 L115.5,403.5 M108.5,400.5 L116.5,400.5 M108.5,393.5 L116.5,393.5 M112.5,400.5 L112.5,393.5 M116.5,390.5 L116.5,384.5 M108.5,380.5 L108.5,376.5 M108.5,378.5 L116.5,378.5 M116.5,380.5 L116.5,376.5 M116.5,372.5 L108.5,372.5 L116.5,366.5 L108.5,366.5 M108.5,363.5 L116.5,360.5 L108.5,357.5" stroke="#00A0A0" stroke-width="1" fill="none" stroke-linecap="square" stroke-linejoin="miter"/>
<path d="M125.5,372.5 L125.5,371.5 L125.5,367.5 L125.5,366.5 L128.5,366.5 L129.5,367.5 L129.5,371.5 L130.5,372.5 L133.5,372.5 L133.5,366.5" stroke="#00A0A0" stroke-width="1" fill="none" stroke-linecap="square" stroke-linejoin="miter"/>
<path d="M156.5,400.5 L156.5,401.5 L156.5,405.5 L156.5,406.5 L159.5,406.5 L160.5,405.5 L160.5,401.5 L160.5,400.5 L163.5,400.5 L164.5,401.5 L164.5,405.5 L163.5,406.5 M156.5,397.5 L164.5,396.5 L159.5,394.5 L164.5,393.5 L156.5,391.5 M156.5,388.5 L156.5,387.5 L156.5,383.5 L156.5,382.5 L158.5,382.5 L160.5,385.5 L161.5,385.5 M163.5,385.5 L164.5,385.5" stroke="#00A0A0" stroke-width="1" fill="none" stroke-linecap="square" stroke-linejoin="miter"/>
<path d="M108.5,488.5 L108.5,482.5 L111.5,485.5 L111.5,483.5 L112.5,482.5 L115.5,482.5 L116.5,483.5 L116.5,487.5 L115.5,488.5" stroke="#00A0A0" stroke-width="1" fill="none" stroke-linecap="square" stroke-linejoin="miter"/>
<path d="M142.5,487.5 L141.5,485.5 L149.5,485.5 M149.5,487.5 L149.5,483.5" stroke="#00A0A0" stroke-width="1" fill="none" stroke-linecap="square" stroke-linejoin="miter"/>
<circle cx="293.5" cy="344.5" r="2.0" stroke="#A00000" stroke-width="1" fill="none"/>
<line x1="293.5" y1="344.5" x2="293.5" y2="394.5" stroke="#A00000" stroke-width="1"/>
<circle cx="293.5" cy="402.5" r="8" stroke="#A00000" stroke-width="1" fill="none"/>
<circle cx="276.5" cy="452.5" r="8" stroke="#A00000" stroke-width="1" fill="none"/>
<circle cx="310.5" cy="452.5" r="8" stroke="#A00000" stroke-width="1" fill="none"/>
<line x1="293.5" y1="410.5" x2="302.5" y2="450.5" stroke="#A00000" stroke-width="1"/>
<line x1="276.5" y1="460.5" x2="276.5" y2="511.5" stroke="#A00000" stroke-width="1"/>
<line x1="310.5" y1="460.5" x2="310.5" y2="511.5" stroke="#A00000" stroke-width="1"/>
<circle cx="276.5" cy="511.5" r="2.0" stroke="#A00000" stroke-width="1" fill="none"/>
<circle cx="310.5" cy="511.5" r="2.0" stroke="#A00000" stroke-width="1" fill="none"/>
<path d="M266.5,439.5 L266.5,440.5 L266.5,445.5 L266.5,446.5 L269.5,446.5 L270.5,445.5 L270.5,440.5 L270.5,439.5 L273.5,439.5 L274.5,440.5 L274.5,445.5 L273.5,446.5 M266.5,436.5 L274.5,435.5 L269.5,433.5 L274.5,432.5 L266.5,430.5 M266.5,426.5 L266.5,422.5 M266.5,424.5 L274.5,424.5 M274.5,426.5 L274.5,422.5 M266.5,418.5 L266.5,412.5 M266.5,415.5 L274.5,415.5 M266.5,403.5 L266.5,404.5 L266.5,408.5 L266.5,409.5 L273.5,409.5 L274.5,408.5 L274.5,404.5 L273.5,403.5 M266.5,400.5 L274.5,400.5 M266.5,393.5 L274.5,393.5 M270.5,400.5 L270.5,393.5 M274.5,390.5 L274.5,384.5 M266.5,380.5 L266.5,376.5 M266.5,378.5 L274.5,378.5 M274.5,380.5 L274.5,376.5 M274.5,372.5 L266.5,372.5 L274.5,366.5 L266.5,366.5 M266.5,363.5 L274.5,360.5 L266.5,357.5" stroke="#00A0A0" stroke-width="1" fill="none" stroke-linecap="square" stroke-linejoin="miter"/>
<path d="M283.5,372.5 L283.5,371.5 L283.5,367.5 L283.5,366.5 L286.5,366.5 L287.5,367.5 L287.5,371.5 L288.5,372.5 L291.5,372.5 L291.5,366.5" stroke="#00A0A0" stroke-width="1" fill="none" stroke-linecap="square" stroke-linejoin="miter"/>
<path d="M314.5,400.5 L314.5,401.5 L314.5,405.5 L314.5,406.5 L317.5,406.5 L318.5,405.5 L318.5,401.5 L318.5,400.5 L321.5,400.5 L322.5,401.5 L322.5,405.5 L321.5,406.5 M314.5,397.5 L322.5,396.5 L317.5,394.5 L322.5,393.5 L314.5,391.5 M314.5,388.5 L314.5,387.5 L314.5,383.5 L314.5,382.5 L316.5,382.5 L318.5,385.5 L319.5,385.5 M321.5,385.5 L322.5,385.5" stroke="#00A0A0" stroke-width="1" fill="none" stroke-linecap="square" stroke-linejoin="miter"/>
<path d="M266.5,488.5 L266.5,482.5 L269.5,485.5 L269.5,483.5 L270.5,482.5 L273.5,482.5 L274.5,483.5 L274.5,487.5 L273.5,488.5" stroke="#00A0A0" stroke-width="1" fill="none" stroke-linecap="square" stroke-linejoin="miter"/>
<path d="M301.5,487.5 L300.5,485.5 L308.5,485.5 M308.5,487.5 L308.5,483.5" stroke="#00A0A0" stroke-width="1" fill="none" stroke-linecap="square" stroke-linejoin="miter"/>
<circle cx="460.5" cy="344.5" r="2.0" stroke="#A00000" stroke-width="1" fill="none"/>
<line x1="460.5" y1="344.5" x2="460.5" y2="394.5" stroke="#A00000" stroke-width="1"/>
<circle cx="460.5" cy="402.5" r="8" stroke="#A00000" stroke-width="1" fill="none"/>
<circle cx="443.5" cy="452.5" r="8" stroke="#A00000" stroke-width="1" fill="none"/>
<circle cx="476.5" cy="452.5" r="8" stroke="#A00000" stroke-width="1" fill="none"/>
<line x1="460.5" y1="410.5" x2="468.5" y2="450.5" stroke="#A00000" stroke-width="1"/>
<line x1="443.5" y1="460.5" x2="443.5" y2="511.5" stroke="#A00000" stroke-width="1"/>
<line x1="476.5" y1="460.5" x2="476.5" y2="511.5" stroke="#A00000" stroke-width="1"/>
<circle cx="443.5" cy="511.5" r="2.0" stroke="#A00000" stroke-width="1" fill="none"/>
<circle cx="476.5" cy="511.5" r="2.0" stroke="#A00000" stroke-width="1" fill="none"/>
<path d="M433.5,439.5 L433.5,440.5 L433.5,445.5 L433.5,446.5 L436.5,446.5 L437.5,445.5 L437.5,440.5 L437.5,439.5 L440.5,439.5 L441.5,440.5 L441.5,445.5 L440.5,446.5 M433.5,436.5 L441.5,435.5 L436.5,433.5 L441.5,432.5 L433.5,430.5 M433.5,426.5 L433.5,422.5 M433.5,424.5 L441.5,424.5 M441.5,426.5 L441.5,422.5 M433.5,418.5 L433.5,412.5 M433.5,415.5 L441.5,415.5 M433.5,403.5 L433.5,404.5 L433.5,408.5 L433.5,409.5 L440.5,409.5 L441.5,408.5 L441.5,404.5 L440.5,403.5 M433.5,400.5 L441.5,400.5 M433.5,393.5 L441.5,393.5 M437.5,400.5 L437.5,393.5 M441.5,390.5 L441.5,384.5 M433.5,380.5 L433.5,376.5 M433.5,378.5 L441.5,378.5 M441.5,380.5 L441.5,376.5 M441.5,372.5 L433.5,372.5 L441.5,366.5 L433.5,366.5 M433.5,363.5 L441.5,360.5 L433.5,357.5" stroke="#00A0A0" stroke-width="1" fill="none" stroke-linecap="square" stroke-linejoin="miter"/>
<path d="M450.5,372.5 L450.5,371.5 L450.5,367.5 L450.5,366.5 L453.5,366.5 L454.5,367.5 L454.5,371.5 L455.5,372.5 L458.5,372.5 L458.5,366.5" stroke="#00A0A0" stroke-width="1" fill="none" stroke-linecap="square" stroke-linejoin="miter"/>
<path d="M481.5,400.5 L481.5,401.5 L481.5,405.5 L481.5,406.5 L484.5,406.5 L485.5,405.5 L485.5,401.5 L485.5,400.5 L488.5,400.5 L489.5,401.5 L489.5,405.5 L488.5,406.5 M481.5,397.5 L489.5,396.5 L484.5,394.5 L489.5,393.5 L481.5,391.5 M481.5,388.5 L481.5,387.5 L481.5,383.5 L481.5,382.5 L483.5,382.5 L485.5,385.5 L486.5,385.5 M488.5,385.5 L489.5,385.5" stroke="#00A0A0" stroke-width="1" fill="none" stroke-linecap="square" stroke-linejoin="miter"/>
<path d="M433.5,488.5 L433.5,482.5 L436.5,485.5 L436.5,483.5 L437.5,482.5 L440.5,482.5 L441.5,483.5 L441.5,487.5 L440.5,488.5" stroke="#00A0A0" stroke-width="1" fill="none" stroke-linecap="square" stroke-linejoin="miter"/>
<path d="M467.5,487.5 L466.5,485.5 L474.5,485.5 M474.5,487.5 L474.5,483.5" stroke="#00A0A0" stroke-width="1" fill="none" stroke-linecap="square" stroke-linejoin="miter"/>
<circle cx="626.5" cy="344.5" r="2.0" stroke="#A00000" stroke-width="1" fill="none"/>
<line x1="626.5" y1="344.5" x2="626.5" y2="394.5" stroke="#A00000" stroke-width="1"/>
<circle cx="626.5" cy="402.5" r="8" stroke="#A00000" stroke-width="1" fill="none"/>
<circle cx="610.5" cy="452.5" r="8" stroke="#A00000" stroke-width="1" fill="none"/>
<circle cx="643.5" cy="452.5" r="8" stroke="#A00000" stroke-width="1" fill="none"/>
<line x1="626.5" y1="410.5" x2="635.5" y2="450.5" stroke="#A00000" stroke-width="1"/>
<line x1="610.5" y1="460.5" x2="610.5" y2="511.5" stroke="#A00000" stroke-width="1"/>
<line x1="643.5" y1="460.5" x2="643.5" y2="511.5" stroke="#A00000" stroke-width="1"/>
<circle cx="610.5" cy="511.5" r="2.0" stroke="#A00000" stroke-width="1" fill="none"/>
<circle cx="643.5" cy="511.5" r="2.0" stroke="#A00000" stroke-width="1" fill="none"/>
<path d="M599.5,439.5 L599.5,440.5 L599.5,445.5 L599.5,446.5 L602.5,446.5 L603.5,445.5 L603.5,440.5 L603.5,439.5 L606.5,439.5 L607.5,440.5 L607.5,445.5 L606.5,446.5 M599.5,436.5 L607.5,435.5 L602.5,433.5 L607.5,432.5 L599.5,430.5 M599.5,426.5 L599.5,422.5 M599.5,424.5 L607.5,424.5 M607.5,426.5 L607.5,422.5 M599.5,418.5 L599.5,412.5 M599.5,415.5 L607.5,415.5 M599.5,403.5 L599.5,404.5 L599.5,408.5 L599.5,409.5 L606.5,409.5 L607.5,408.5 L607.5,404.5 L606.5,403.5 M599.5,400.5 L607.5,400.5 M599.5,393.5 L607.5,393.5 M603.5,400.5 L603.5,393.5 M607.5,390.5 L607.5,384.5 M599.5,380.5 L599.5,376.5 M599.5,378.5 L607.5,378.5 M607.5,380.5 L607.5,376.5 M607.5,372.5 L599.5,372.5 L607.5,366.5 L599.5,366.5 M599.5,363.5 L607.5,360.5 L599.5,357.5" stroke="#00A0A0" stroke-width="1" fill="none" stroke-linecap="square" stroke-linejoin="miter"/>
<path d="M616.5,372.5 L616.5,371.5 L616.5,367.5 L616.5,366.5 L619.5,366.5 L620.5,367.5 L620.5,371.5 L621.5,372.5 L624.5,372.5 L624.5,366.5" stroke="#00A0A0" stroke-width="1" fill="none" stroke-linecap="square" stroke-linejoin="miter"/>
<path d="M647.5,400.5 L647.5,401.5 L647.5,405.5 L647.5,406.5 L650.5,406.5 L651.5,405.5 L651.5,401.5 L651.5,400.5 L654.5,400.5 L655.5,401.5 L655.5,405.5 L654.5,406.5 M647.5,397.5 L655.5,396.5 L650.5,394.5 L655.5,393.5 L647.5,391.5 M647.5,388.5 L647.5,387.5 L647.5,383.5 L647.5,382.5 L649.5,382.5 L651.5,385.5 L652.5,385.5 M654.5,385.5 L655.5,385.5" stroke="#00A0A0" stroke-width="1" fill="none" stroke-linecap="square" stroke-linejoin="miter"/>
<path d="M600.5,488.5 L600.5,482.5 L603.5,485.5 L603.5,483.5 L604.5,482.5 L607.5,482.5 L608.5,483.5 L608.5,487.5 L607.5,488.5" stroke="#00A0A0" stroke-width="1" fill="none" stroke-linecap="square" stroke-linejoin="miter"/>
<path d="M634.5,487.5 L633.5,485.5 L641.5,485.5 M641.5,487.5 L641.5,483.5" stroke="#00A0A0" stroke-width="1" fill="none" stroke-linecap="square" stroke-linejoin="miter"/>
<circle cx="151.5" cy="511.5" r="2.0" stroke="#A00000" stroke-width="1" fill="none"/>
<circle cx="151.5" cy="611.5" r="2.0" stroke="#A00000" stroke-width="1" fill="none"/>
<line x1="151.5" y1="511.5" x2="151.5" y2="528.5" stroke="#A00000" stroke-width="1"/>
<line x1="151.5" y1="594.5" x2="151.5" y2="611.5" stroke="#A00000" stroke-width="1"/>
<path d="M151.5,528.5 A8.25,8.25 0 0 1 151.5,545.0 A8.25,8.25 0 0 1 151.5,561.5 A8.25,8.25 0 0 1 151.5,578.0 A8.25,8.25 0 0 1 151.5,594.5" stroke="#A00000" stroke-width="1.2" fill="none"/>
<path d="M139.5,568.5 L146.5,568.5 L146.5,563.5 M140.5,560.5 L139.5,559.5 L139.5,556.5 L140.5,555.5 L141.5,555.5 L143.5,558.5 L144.5,558.5 M146.5,558.5 L146.5,558.5" stroke="#00A0A0" stroke-width="1" fill="none" stroke-linecap="square" stroke-linejoin="miter"/>
<path d="M164.5,588.5 L164.5,585.5 M164.5,587.5 L171.5,587.5 M171.5,588.5 L171.5,585.5 M171.5,582.5 L164.5,582.5 L171.5,577.5 L164.5,577.5 M164.5,574.5 L164.5,571.5 L166.5,569.5 L169.5,569.5 L171.5,571.5 L171.5,574.5 L164.5,574.5 M164.5,567.5 L170.5,567.5 L171.5,566.5 L171.5,562.5 L170.5,562.5 L164.5,562.5 M165.5,554.5 L164.5,555.5 L164.5,558.5 L165.5,559.5 L170.5,559.5 L171.5,558.5 L171.5,555.5 L170.5,554.5 M164.5,552.5 L164.5,547.5 M164.5,549.5 L171.5,549.5 M164.5,543.5 L164.5,540.5 L165.5,539.5 L170.5,539.5 L171.5,540.5 L171.5,543.5 L170.5,544.5 L165.5,544.5 L164.5,543.5 M171.5,537.5 L164.5,537.5 L164.5,532.5 L165.5,532.5 L167.5,532.5 L168.5,532.5 L168.5,537.5 M168.5,534.5 L171.5,532.5" stroke="#00A0A0" stroke-width="1" fill="none" stroke-linecap="square" stroke-linejoin="miter"/>
<circle cx="310.5" cy="511.5" r="2.0" stroke="#A00000" stroke-width="1" fill="none"/>
<circle cx="310.5" cy="611.5" r="2.0" stroke="#A00000" stroke-width="1" fill="none"/>
<line x1="310.5" y1="511.5" x2="310.5" y2="528.5" stroke="#A00000" stroke-width="1"/>
<line x1="310.5" y1="594.5" x2="310.5" y2="611.5" stroke="#A00000" stroke-width="1"/>
<path d="M310.5,528.5 A8.25,8.25 0 0 1 310.5,545.0 A8.25,8.25 0 0 1 310.5,561.5 A8.25,8.25 0 0 1 310.5,578.0 A8.25,8.25 0 0 1 310.5,594.5" stroke="#A00000" stroke-width="1.2" fill="none"/>
<path d="M298.5,568.5 L305.5,568.5 L305.5,563.5 M299.5,560.5 L298.5,559.5 L298.5,556.5 L299.5,555.5 L300.5,555.5 L302.5,558.5 L303.5,558.5 M305.5,558.5 L305.5,558.5" stroke="#00A0A0" stroke-width="1" fill="none" stroke-linecap="square" stroke-linejoin="miter"/>
<path d="M323.5,588.5 L323.5,585.5 M323.5,587.5 L330.5,587.5 M330.5,588.5 L330.5,585.5 M330.5,582.5 L323.5,582.5 L330.5,577.5 L323.5,577.5 M323.5,574.5 L323.5,571.5 L325.5,569.5 L328.5,569.5 L330.5,571.5 L330.5,574.5 L323.5,574.5 M323.5,567.5 L329.5,567.5 L330.5,566.5 L330.5,562.5 L329.5,562.5 L323.5,562.5 M324.5,554.5 L323.5,555.5 L323.5,558.5 L324.5,559.5 L329.5,559.5 L330.5,558.5 L330.5,555.5 L329.5,554.5 M323.5,552.5 L323.5,547.5 M323.5,549.5 L330.5,549.5 M323.5,543.5 L323.5,540.5 L324.5,539.5 L329.5,539.5 L330.5,540.5 L330.5,543.5 L329.5,544.5 L324.5,544.5 L323.5,543.5 M330.5,537.5 L323.5,537.5 L323.5,532.5 L324.5,532.5 L326.5,532.5 L327.5,532.5 L327.5,537.5 M327.5,534.5 L330.5,532.5" stroke="#00A0A0" stroke-width="1" fill="none" stroke-linecap="square" stroke-linejoin="miter"/>
<circle cx="493.5" cy="511.5" r="2.0" stroke="#A00000" stroke-width="1" fill="none"/>
<circle cx="493.5" cy="611.5" r="2.0" stroke="#A00000" stroke-width="1" fill="none"/>
<line x1="493.5" y1="511.5" x2="493.5" y2="528.5" stroke="#A00000" stroke-width="1"/>
<line x1="493.5" y1="594.5" x2="493.5" y2="611.5" stroke="#A00000" stroke-width="1"/>
<path d="M493.5,528.5 A8.25,8.25 0 0 1 493.5,545.0 A8.25,8.25 0 0 1 493.5,561.5 A8.25,8.25 0 0 1 493.5,578.0 A8.25,8.25 0 0 1 493.5,594.5" stroke="#A00000" stroke-width="1.2" fill="none"/>
<path d="M481.5,568.5 L488.5,568.5 L488.5,563.5 M482.5,560.5 L481.5,559.5 L481.5,556.5 L482.5,555.5 L483.5,555.5 L485.5,558.5 L486.5,558.5 M488.5,558.5 L488.5,558.5" stroke="#00A0A0" stroke-width="1" fill="none" stroke-linecap="square" stroke-linejoin="miter"/>
<path d="M506.5,588.5 L506.5,585.5 M506.5,587.5 L513.5,587.5 M513.5,588.5 L513.5,585.5 M513.5,582.5 L506.5,582.5 L513.5,577.5 L506.5,577.5 M506.5,574.5 L506.5,571.5 L508.5,569.5 L511.5,569.5 L513.5,571.5 L513.5,574.5 L506.5,574.5 M506.5,567.5 L512.5,567.5 L513.5,566.5 L513.5,562.5 L512.5,562.5 L506.5,562.5 M507.5,554.5 L506.5,555.5 L506.5,558.5 L507.5,559.5 L512.5,559.5 L513.5,558.5 L513.5,555.5 L512.5,554.5 M506.5,552.5 L506.5,547.5 M506.5,549.5 L513.5,549.5 M506.5,543.5 L506.5,540.5 L507.5,539.5 L512.5,539.5 L513.5,540.5 L513.5,543.5 L512.5,544.5 L507.5,544.5 L506.5,543.5 M513.5,537.5 L506.5,537.5 L506.5,532.5 L507.5,532.5 L509.5,532.5 L510.5,532.5 L510.5,537.5 M510.5,534.5 L513.5,532.5" stroke="#00A0A0" stroke-width="1" fill="none" stroke-linecap="square" stroke-linejoin="miter"/>
<circle cx="660.5" cy="511.5" r="2.0" stroke="#A00000" stroke-width="1" fill="none"/>
<circle cx="660.5" cy="611.5" r="2.0" stroke="#A00000" stroke-width="1" fill="none"/>
<line x1="660.5" y1="511.5" x2="660.5" y2="528.5" stroke="#A00000" stroke-width="1"/>
<line x1="660.5" y1="594.5" x2="660.5" y2="611.5" stroke="#A00000" stroke-width="1"/>
<path d="M660.5,528.5 A8.25,8.25 0 0 1 660.5,545.0 A8.25,8.25 0 0 1 660.5,561.5 A8.25,8.25 0 0 1 660.5,578.0 A8.25,8.25 0 0 1 660.5,594.5" stroke="#A00000" stroke-width="1.2" fill="none"/>
<path d="M648.5,568.5 L655.5,568.5 L655.5,563.5 M649.5,560.5 L648.5,559.5 L648.5,556.5 L649.5,555.5 L650.5,555.5 L652.5,558.5 L653.5,558.5 M655.5,558.5 L655.5,558.5" stroke="#00A0A0" stroke-width="1" fill="none" stroke-linecap="square" stroke-linejoin="miter"/>
<path d="M673.5,588.5 L673.5,585.5 M673.5,587.5 L680.5,587.5 M680.5,588.5 L680.5,585.5 M680.5,582.5 L673.5,582.5 L680.5,577.5 L673.5,577.5 M673.5,574.5 L673.5,571.5 L675.5,569.5 L678.5,569.5 L680.5,571.5 L680.5,574.5 L673.5,574.5 M673.5,567.5 L679.5,567.5 L680.5,566.5 L680.5,562.5 L679.5,562.5 L673.5,562.5 M674.5,554.5 L673.5,555.5 L673.5,558.5 L674.5,559.5 L679.5,559.5 L680.5,558.5 L680.5,555.5 L679.5,554.5 M673.5,552.5 L673.5,547.5 M673.5,549.5 L680.5,549.5 M673.5,543.5 L673.5,540.5 L674.5,539.5 L679.5,539.5 L680.5,540.5 L680.5,543.5 L679.5,544.5 L674.5,544.5 L673.5,543.5 M680.5,537.5 L673.5,537.5 L673.5,532.5 L674.5,532.5 L676.5,532.5 L677.5,532.5 L677.5,537.5 M677.5,534.5 L680.5,532.5" stroke="#00A0A0" stroke-width="1" fill="none" stroke-linecap="square" stroke-linejoin="miter"/>
<path d="M143.0,611.5 L160.0,611.5 L151.5,619.5 Z" stroke="#A00000" stroke-width="1" fill="none"/>
<path d="M485.0,611.5 L502.0,611.5 L493.5,619.5 Z" stroke="#A00000" stroke-width="1" fill="none"/>
<path d="M652.0,611.5 L669.0,611.5 L660.5,619.5 Z" stroke="#A00000" stroke-width="1" fill="none"/>
<circle cx="151.5" cy="652.5" r="2.0" stroke="#A00000" stroke-width="1" fill="none"/>
<circle cx="151.5" cy="752.5" r="2.0" stroke="#A00000" stroke-width="1" fill="none"/>
<line x1="151.5" y1="652.5" x2="151.5" y2="669.5" stroke="#A00000" stroke-width="1"/>
<line x1="151.5" y1="735.5" x2="151.5" y2="752.5" stroke="#A00000" stroke-width="1"/>
<path d="M151.5,669.5 A8.25,8.25 0 0 1 151.5,686.0 A8.25,8.25 0 0 1 151.5,702.5 A8.25,8.25 0 0 1 151.5,719.0 A8.25,8.25 0 0 1 151.5,735.5" stroke="#A00000" stroke-width="1.2" fill="none"/>
<path d="M139.5,709.5 L146.5,709.5 L146.5,704.5 M140.5,701.5 L139.5,700.5 L139.5,697.5 L140.5,696.5 L141.5,696.5 L143.5,699.5 L144.5,699.5 M146.5,699.5 L146.5,699.5" stroke="#00A0A0" stroke-width="1" fill="none" stroke-linecap="square" stroke-linejoin="miter"/>
<path d="M164.5,729.5 L164.5,726.5 M164.5,728.5 L171.5,728.5 M171.5,729.5 L171.5,726.5 M171.5,723.5 L164.5,723.5 L171.5,718.5 L164.5,718.5 M164.5,715.5 L164.5,712.5 L166.5,710.5 L169.5,710.5 L171.5,712.5 L171.5,715.5 L164.5,715.5 M164.5,708.5 L170.5,708.5 L171.5,707.5 L171.5,703.5 L170.5,703.5 L164.5,703.5 M165.5,695.5 L164.5,696.5 L164.5,699.5 L165.5,700.5 L170.5,700.5 L171.5,699.5 L171.5,696.5 L170.5,695.5 M164.5,693.5 L164.5,688.5 M164.5,690.5 L171.5,690.5 M164.5,684.5 L164.5,681.5 L165.5,680.5 L170.5,680.5 L171.5,681.5 L171.5,684.5 L170.5,685.5 L165.5,685.5 L164.5,684.5 M171.5,678.5 L164.5,678.5 L164.5,673.5 L165.5,673.5 L167.5,673.5 L168.5,673.5 L168.5,678.5 M168.5,675.5 L171.5,673.5" stroke="#00A0A0" stroke-width="1" fill="none" stroke-linecap="square" stroke-linejoin="miter"/>
<path d="M143.0,752.5 L160.0,752.5 L151.5,760.5 Z" stroke="#A00000" stroke-width="1" fill="none"/>
<circle cx="310.5" cy="652.5" r="2.0" stroke="#A00000" stroke-width="1" fill="none"/>
<circle cx="310.5" cy="752.5" r="2.0" stroke="#A00000" stroke-width="1" fill="none"/>
<line x1="310.5" y1="652.5" x2="310.5" y2="669.5" stroke="#A00000" stroke-width="1"/>
<line x1="310.5" y1="735.5" x2="310.5" y2="752.5" stroke="#A00000" stroke-width="1"/>
<path d="M310.5,669.5 A8.25,8.25 0 0 1 310.5,686.0 A8.25,8.25 0 0 1 310.5,702.5 A8.25,8.25 0 0 1 310.5,719.0 A8.25,8.25 0 0 1 310.5,735.5" stroke="#A00000" stroke-width="1.2" fill="none"/>
<path d="M298.5,709.5 L305.5,709.5 L305.5,704.5 M299.5,701.5 L298.5,700.5 L298.5,697.5 L299.5,696.5 L300.5,696.5 L302.5,699.5 L303.5,699.5 M305.5,699.5 L305.5,699.5" stroke="#00A0A0" stroke-width="1" fill="none" stroke-linecap="square" stroke-linejoin="miter"/>
<path d="M323.5,729.5 L323.5,726.5 M323.5,728.5 L330.5,728.5 M330.5,729.5 L330.5,726.5 M330.5,723.5 L323.5,723.5 L330.5,718.5 L323.5,718.5 M323.5,715.5 L323.5,712.5 L325.5,710.5 L328.5,710.5 L330.5,712.5 L330.5,715.5 L323.5,715.5 M323.5,708.5 L329.5,708.5 L330.5,707.5 L330.5,703.5 L329.5,703.5 L323.5,703.5 M324.5,695.5 L323.5,696.5 L323.5,699.5 L324.5,700.5 L329.5,700.5 L330.5,699.5 L330.5,696.5 L329.5,695.5 M323.5,693.5 L323.5,688.5 M323.5,690.5 L330.5,690.5 M323.5,684.5 L323.5,681.5 L324.5,680.5 L329.5,680.5 L330.5,681.5 L330.5,684.5 L329.5,685.5 L324.5,685.5 L323.5,684.5 M330.5,678.5 L323.5,678.5 L323.5,673.5 L324.5,673.5 L326.5,673.5 L327.5,673.5 L327.5,678.5 M327.5,675.5 L330.5,673.5" stroke="#00A0A0" stroke-width="1" fill="none" stroke-linecap="square" stroke-linejoin="miter"/>
<circle cx="493.5" cy="661.5" r="2.0" stroke="#A00000" stroke-width="1" fill="none"/>
<circle cx="493.5" cy="761.5" r="2.0" stroke="#A00000" stroke-width="1" fill="none"/>
<line x1="493.5" y1="661.5" x2="493.5" y2="678.5" stroke="#A00000" stroke-width="1"/>
<line x1="493.5" y1="744.5" x2="493.5" y2="761.5" stroke="#A00000" stroke-width="1"/>
<path d="M493.5,678.5 A8.25,8.25 0 0 1 493.5,695.0 A8.25,8.25 0 0 1 493.5,711.5 A8.25,8.25 0 0 1 493.5,728.0 A8.25,8.25 0 0 1 493.5,744.5" stroke="#A00000" stroke-width="1.2" fill="none"/>
<path d="M481.5,718.5 L488.5,718.5 L488.5,713.5 M482.5,710.5 L481.5,709.5 L481.5,706.5 L482.5,705.5 L483.5,705.5 L485.5,708.5 L486.5,708.5 M488.5,708.5 L488.5,708.5" stroke="#00A0A0" stroke-width="1" fill="none" stroke-linecap="square" stroke-linejoin="miter"/>
<path d="M506.5,738.5 L506.5,735.5 M506.5,737.5 L513.5,737.5 M513.5,738.5 L513.5,735.5 M513.5,732.5 L506.5,732.5 L513.5,727.5 L506.5,727.5 M506.5,724.5 L506.5,721.5 L508.5,719.5 L511.5,719.5 L513.5,721.5 L513.5,724.5 L506.5,724.5 M506.5,717.5 L512.5,717.5 L513.5,716.5 L513.5,712.5 L512.5,712.5 L506.5,712.5 M507.5,704.5 L506.5,705.5 L506.5,708.5 L507.5,709.5 L512.5,709.5 L513.5,708.5 L513.5,705.5 L512.5,704.5 M506.5,702.5 L506.5,697.5 M506.5,699.5 L513.5,699.5 M506.5,693.5 L506.5,690.5 L507.5,689.5 L512.5,689.5 L513.5,690.5 L513.5,693.5 L512.5,694.5 L507.5,694.5 L506.5,693.5 M513.5,687.5 L506.5,687.5 L506.5,682.5 L507.5,682.5 L509.5,682.5 L510.5,682.5 L510.5,687.5 M510.5,684.5 L513.5,682.5" stroke="#00A0A0" stroke-width="1" fill="none" stroke-linecap="square" stroke-linejoin="miter"/>
<path d="M485.0,761.5 L502.0,761.5 L493.5,769.5 Z" stroke="#A00000" stroke-width="1" fill="none"/>
<circle cx="660.5" cy="661.5" r="2.0" stroke="#A00000" stroke-width="1" fill="none"/>
<circle cx="660.5" cy="761.5" r="2.0" stroke="#A00000" stroke-width="1" fill="none"/>
<line x1="660.5" y1="661.5" x2="660.5" y2="678.5" stroke="#A00000" stroke-width="1"/>
<line x1="660.5" y1="744.5" x2="660.5" y2="761.5" stroke="#A00000" stroke-width="1"/>
<path d="M660.5,678.5 A8.25,8.25 0 0 1 660.5,695.0 A8.25,8.25 0 0 1 660.5,711.5 A8.25,8.25 0 0 1 660.5,728.0 A8.25,8.25 0 0 1 660.5,744.5" stroke="#A00000" stroke-width="1.2" fill="none"/>
<path d="M648.5,718.5 L655.5,718.5 L655.5,713.5 M649.5,710.5 L648.5,709.5 L648.5,706.5 L649.5,705.5 L650.5,705.5 L652.5,708.5 L653.5,708.5 M655.5,708.5 L655.5,708.5" stroke="#00A0A0" stroke-width="1" fill="none" stroke-linecap="square" stroke-linejoin="miter"/>
<path d="M673.5,738.5 L673.5,735.5 M673.5,737.5 L680.5,737.5 M680.5,738.5 L680.5,735.5 M680.5,732.5 L673.5,732.5 L680.5,727.5 L673.5,727.5 M673.5,724.5 L673.5,721.5 L675.5,719.5 L678.5,719.5 L680.5,721.5 L680.5,724.5 L673.5,724.5 M673.5,717.5 L679.5,717.5 L680.5,716.5 L680.5,712.5 L679.5,712.5 L673.5,712.5 M674.5,704.5 L673.5,705.5 L673.5,708.5 L674.5,709.5 L679.5,709.5 L680.5,708.5 L680.5,705.5 L679.5,704.5 M673.5,702.5 L673.5,697.5 M673.5,699.5 L680.5,699.5 M673.5,693.5 L673.5,690.5 L674.5,689.5 L679.5,689.5 L680.5,690.5 L680.5,693.5 L679.5,694.5 L674.5,694.5 L673.5,693.5 M680.5,687.5 L673.5,687.5 L673.5,682.5 L674.5,682.5 L676.5,682.5 L677.5,682.5 L677.5,687.5 M677.5,684.5 L680.5,682.5" stroke="#00A0A0" stroke-width="1" fill="none" stroke-linecap="square" stroke-linejoin="miter"/>
<path d="M652.0,761.5 L669.0,761.5 L660.5,769.5 Z" stroke="#A00000" stroke-width="1" fill="none"/>
<circle cx="243.5" cy="752.5" r="2.0" stroke="#A00000" stroke-width="1" fill="none"/>
<circle cx="243.5" cy="819.5" r="2.0" stroke="#A00000" stroke-width="1" fill="none"/>
<line x1="243.5" y1="752.5" x2="243.5" y2="780.5" stroke="#A00000" stroke-width="1"/>
<line x1="243.5" y1="790.5" x2="243.5" y2="819.5" stroke="#A00000" stroke-width="1"/>
<rect x="226.0" y="779.5" width="35.0" height="2" fill="#A00000"/>
<rect x="226.0" y="789.5" width="35.0" height="2" fill="#A00000"/>
<path d="M235.0,819.5 L252.0,819.5 L243.5,827.5 Z" stroke="#A00000" stroke-width="1" fill="none"/>
<path d="M258.5,766.5 L257.5,766.5 L253.5,766.5 L252.5,766.5 L252.5,773.5 L253.5,774.5 L257.5,774.5 L258.5,773.5 M261.5,766.5 L262.5,766.5 L267.5,766.5 L268.5,766.5 L268.5,768.5 L265.5,770.5 L265.5,771.5 M265.5,773.5 L265.5,774.5" stroke="#00A0A0" stroke-width="1" fill="none" stroke-linecap="square" stroke-linejoin="miter"/>
<path d="M254.5,800.5 L256.5,799.5 L256.5,807.5 M254.5,807.5 L258.5,807.5 M263.5,799.5 L267.5,799.5 L268.5,799.5 L268.5,806.5 L267.5,807.5 L263.5,807.5 L262.5,806.5 L262.5,799.5 L263.5,799.5 M268.5,799.5 L262.5,806.5 M272.5,799.5 L277.5,799.5 L278.5,799.5 L278.5,806.5 L277.5,807.5 L272.5,807.5 L271.5,806.5 L271.5,799.5 L272.5,799.5 M278.5,799.5 L271.5,806.5 M281.5,807.5 L281.5,801.5 L286.5,801.5 L287.5,802.5 L287.5,807.5" stroke="#00A0A0" stroke-width="1" fill="none" stroke-linecap="square" stroke-linejoin="miter"/>
<circle cx="310.5" cy="752.5" r="2.0" stroke="#A00000" stroke-width="1" fill="none"/>
<circle cx="310.5" cy="836.5" r="2.0" stroke="#A00000" stroke-width="1" fill="none"/>
<line x1="310.5" y1="752.5" x2="310.5" y2="769.5" stroke="#A00000" stroke-width="1"/>
<line x1="310.5" y1="818.5" x2="310.5" y2="836.5" stroke="#A00000" stroke-width="1"/>
<rect x="303.5" y="769.5" width="13" height="49" stroke="#A00000" fill="none"/>
<path d="M308.5,799.5 L307.5,797.5 L315.5,797.5 M315.5,799.5 L315.5,795.5 M315.5,791.5 L307.5,791.5 L311.5,788.5 L307.5,785.5 L315.5,785.5" stroke="#00A0A0" stroke-width="1" fill="none" stroke-linecap="square" stroke-linejoin="miter"/>
<path d="M328.5,800.5 L320.5,800.5 L320.5,795.5 L320.5,794.5 L323.5,794.5 L324.5,795.5 L324.5,800.5 M324.5,797.5 L328.5,794.5 M320.5,791.5 L320.5,790.5 L320.5,786.5 L320.5,785.5 L322.5,785.5 L324.5,788.5 L325.5,788.5 M327.5,788.5 L328.5,788.5" stroke="#00A0A0" stroke-width="1" fill="none" stroke-linecap="square" stroke-linejoin="miter"/>
<path d="M293.5,202 A33,33 0 0 1 359.5,202 L359.5,277 A33,33 0 0 1 293.5,277 Z" stroke="#A00000" fill="none"/>
<circle cx="326.5" cy="152.5" r="2.0" stroke="#A00000" stroke-width="1" fill="none"/>
<line x1="326.5" y1="152.5" x2="326.5" y2="186.5" stroke="#A00000" stroke-width="1"/>
<line x1="310.5" y1="186.5" x2="344.5" y2="186.5" stroke="#A00000" stroke-width="1"/>
<path d="M331.5,177.5 L326.5,177.5 L324.5,178.5 L324.5,181.5 L326.5,181.5 L331.5,181.5" stroke="#00A0A0" stroke-width="1" fill="none" stroke-linecap="square" stroke-linejoin="miter"/>
<path d="M318.5,159.5 L318.5,161.5 L319.5,163.5 L324.5,163.5 L325.5,162.5 L325.5,159.5 L324.5,158.5 L321.5,158.5 L321.5,159.5 L321.5,163.5" stroke="#A00000" stroke-width="1" fill="none" stroke-linecap="square" stroke-linejoin="miter"/>
<path d="M301.5,194 L301.5,202.5 M296.5,202.5 L352.5,202.5 L352.5,194" stroke="#A00000" fill="none" stroke-dasharray="0"/>
<rect x="304" y="202" width="5" height="1" fill="#fff"/><rect x="314" y="202" width="5" height="1" fill="#fff"/><rect x="324" y="202" width="5" height="1" fill="#fff"/><rect x="334" y="202" width="5" height="1" fill="#fff"/><rect x="344" y="202" width="5" height="1" fill="#fff"/>
<path d="M296.5,202.5 L296.5,281.5 L310.5,294.5" stroke="#A00000" stroke-width="1" fill="none"/>
<line x1="310.5" y1="294.5" x2="310.5" y2="319.5" stroke="#A00000" stroke-width="1"/>
<circle cx="310.5" cy="319.5" r="2.0" stroke="#A00000" stroke-width="1" fill="none"/>
<path d="M302.0,319.5 L319.0,319.5 L310.5,327.5 Z" stroke="#A00000" stroke-width="1" fill="none"/>
<path d="M316.5,284.5 A17,17 0 0 1 343.5,294.5" stroke="#A00000" fill="none"/>
<line x1="300.5" y1="211.5" x2="309.5" y2="219.5" stroke="#A00000" stroke-width="1"/>
<line x1="352.5" y1="211.5" x2="347.5" y2="216.5" stroke="#A00000" stroke-width="1"/>
<path d="M322.5,217.5 L321.5,216.5 L318.5,216.5 L317.5,217.5 L317.5,221.5 L318.5,222.5 L321.5,222.5 L322.5,221.5 L322.5,219.5 L319.5,219.5 M324.5,217.5 L325.5,216.5 L328.5,216.5 L329.5,217.5 L329.5,219.5 L328.5,219.5 L325.5,219.5 L324.5,220.5 L324.5,222.5 L329.5,222.5 M332.5,222.5 L336.5,222.5 M344.5,217.5 L343.5,216.5 L340.5,216.5 L339.5,217.5 L339.5,221.5 L340.5,222.5 L343.5,222.5 L344.5,221.5 L344.5,219.5 L341.5,219.5 M350.5,222.5 L350.5,216.5 L346.5,220.5 L346.5,220.5 L351.5,220.5" stroke="#00A0A0" stroke-width="1" fill="none" stroke-linecap="square" stroke-linejoin="miter"/>
<line x1="351.5" y1="219.5" x2="376.5" y2="219.5" stroke="#A00000" stroke-width="1"/>
<path d="M366.5,211.5 L368.5,210.5 L368.5,217.5 M366.5,217.5 L369.5,217.5" stroke="#A00000" stroke-width="1" fill="none" stroke-linecap="square" stroke-linejoin="miter"/>
<path d="M356.5,219.5 L356.5,252.5 L348.5,252.5" stroke="#A00000" stroke-width="1" fill="none"/>
<path d="M302.5,249.5 L302.5,257.5 M304.5,249.5 L304.5,257.5 M300.5,251.5 L306.5,251.5 M300.5,254.5 L306.5,254.5 M315.5,249.5 L309.5,249.5 L309.5,257.5 L315.5,257.5 M309.5,253.5 L313.5,253.5 M324.5,249.5 L323.5,249.5 L319.5,249.5 L318.5,249.5 L318.5,256.5 L319.5,257.5 L323.5,257.5 L324.5,256.5 M327.5,249.5 L327.5,257.5 M334.5,249.5 L334.5,257.5 M327.5,253.5 L334.5,253.5 M338.5,249.5 L342.5,249.5 L343.5,249.5 L343.5,252.5 L342.5,253.5 L338.5,253.5 L337.5,252.5 L337.5,249.5 L338.5,249.5 M338.5,253.5 L337.5,253.5 L337.5,256.5 L338.5,257.5 L342.5,257.5 L343.5,256.5 L343.5,253.5 L342.5,253.5 M347.5,250.5 L349.5,249.5 L349.5,257.5 M347.5,257.5 L351.5,257.5" stroke="#00A0A0" stroke-width="1" fill="none" stroke-linecap="square" stroke-linejoin="miter"/>
<path d="M316.5,249.5 L309.5,249.5 L309.5,257.5 L316.5,257.5 M309.5,253.5 L314.5,253.5 M325.5,249.5 L324.5,249.5 L320.5,249.5 L319.5,249.5 L319.5,256.5 L320.5,257.5 L324.5,257.5 L325.5,256.5 M328.5,249.5 L328.5,257.5 M334.5,249.5 L334.5,257.5 M328.5,253.5 L334.5,253.5 M338.5,249.5 L342.5,249.5 L343.5,249.5 L343.5,252.5 L342.5,253.5 L338.5,253.5 L337.5,252.5 L337.5,249.5 L338.5,249.5 M338.5,253.5 L337.5,253.5 L337.5,256.5 L338.5,257.5 L342.5,257.5 L343.5,256.5 L343.5,253.5 L342.5,253.5 M347.5,250.5 L349.5,249.5 L349.5,257.5 M347.5,257.5 L351.5,257.5" stroke="#00A0A0" stroke-width="1" fill="none" stroke-linecap="square" stroke-linejoin="miter"/>
<line x1="318" y1="252.5" x2="349" y2="252.5" stroke="#A00000" stroke-dasharray="7,5"/>
<line x1="300.5" y1="244.5" x2="309.5" y2="252.5" stroke="#A00000" stroke-width="1"/>
<line x1="352.5" y1="244.5" x2="348.5" y2="248.5" stroke="#A00000" stroke-width="1"/>
<circle cx="276.5" cy="236.5" r="2.0" stroke="#A00000" stroke-width="1" fill="none"/>
<line x1="276.5" y1="236.5" x2="298.5" y2="236.5" stroke="#A00000" stroke-width="1"/>
<path d="M306.5,233.5 L305.5,232.5 L301.5,232.5 L300.5,233.5 L300.5,238.5 L301.5,239.5 L305.5,239.5 L306.5,238.5 L306.5,236.5 L303.5,236.5 M308.5,232.5 L313.5,232.5 L311.5,235.5 L313.5,235.5 L313.5,236.5 L313.5,238.5 L313.5,239.5 L309.5,239.5 L308.5,238.5" stroke="#00A0A0" stroke-width="1" fill="none" stroke-linecap="square" stroke-linejoin="miter"/>
<line x1="318" y1="236.5" x2="349" y2="236.5" stroke="#A00000" stroke-dasharray="7,5"/>
<path d="M282.5,227.5 L287.5,227.5 L284.5,234.5" stroke="#A00000" stroke-width="1" fill="none" stroke-linecap="square" stroke-linejoin="miter"/>
<circle cx="276.5" cy="269.5" r="2.0" stroke="#A00000" stroke-width="1" fill="none"/>
<line x1="276.5" y1="269.5" x2="298.5" y2="269.5" stroke="#A00000" stroke-width="1"/>
<path d="M306.5,266.5 L305.5,265.5 L301.5,265.5 L300.5,266.5 L300.5,271.5 L301.5,272.5 L305.5,272.5 L306.5,271.5 L306.5,269.5 L303.5,269.5 M309.5,266.5 L311.5,265.5 L311.5,272.5 M309.5,272.5 L313.5,272.5" stroke="#00A0A0" stroke-width="1" fill="none" stroke-linecap="square" stroke-linejoin="miter"/>
<line x1="318" y1="269.5" x2="349" y2="269.5" stroke="#A00000" stroke-dasharray="7,5"/>
<path d="M282.5,261.5 L283.5,261.5 L286.5,261.5 L287.5,261.5 L287.5,264.5 L286.5,264.5 L283.5,264.5 L282.5,265.5 L282.5,268.5 L287.5,268.5" stroke="#A00000" stroke-width="1" fill="none" stroke-linecap="square" stroke-linejoin="miter"/>
<path d="M307.5,294.5 L314.5,294.5 M307.5,289.5 L311.5,294.5 M310.5,292.5 L314.5,289.5 M314.5,287.5 L314.5,282.5 M307.5,274.5 L307.5,275.5 L307.5,278.5 L307.5,279.5 L313.5,279.5 L314.5,278.5 L314.5,275.5 L313.5,274.5 L310.5,274.5 L310.5,277.5 M307.5,271.5 L307.5,267.5 L307.5,267.5 L309.5,267.5 L310.5,267.5 L310.5,271.5 L309.5,272.5 L307.5,272.5 L307.5,271.5 M310.5,271.5 L311.5,272.5 L313.5,272.5 L314.5,271.5 L314.5,267.5 L313.5,267.5 L311.5,267.5 L310.5,267.5" stroke="#00A0A0" stroke-width="1" fill="none" stroke-linecap="square" stroke-linejoin="miter"/>
<path d="M302.5,312.5 L301.5,311.5 L302.5,310.5 L301.5,308.5" stroke="#A00000" stroke-width="1" fill="none" stroke-linecap="square" stroke-linejoin="miter"/>
<path d="M243.5,143.5 L251.5,148.5 L243.5,153.5 M254.5,146.5 L258.5,153.5 L261.5,146.5 M265.5,146.5 L271.5,146.5 L272.5,147.5 L272.5,153.5 L266.5,153.5 L265.5,151.5 L265.5,150.5 L266.5,149.5 L272.5,149.5 M277.5,143.5 L279.5,143.5 L279.5,153.5 L281.5,153.5 M286.5,146.5 L286.5,151.5 L287.5,153.5 L292.5,153.5 L293.5,151.5 L293.5,146.5 M297.5,149.5 L304.5,149.5 L304.5,147.5 L303.5,146.5 L298.5,146.5 L297.5,147.5 L297.5,151.5 L298.5,153.5 L303.5,153.5" stroke="#A00000" stroke-width="1" fill="none" stroke-linecap="square" stroke-linejoin="miter"/>
<path d="M245.5,160.5 L252.5,165.5 L245.5,170.5 M255.5,170.5 L255.5,163.5 L261.5,163.5 L263.5,164.5 L263.5,170.5 M267.5,163.5 L272.5,163.5 L273.5,164.5 L273.5,170.5 L267.5,170.5 L266.5,168.5 L266.5,167.5 L267.5,166.5 L273.5,166.5 M277.5,170.5 L277.5,163.5 L283.5,163.5 L284.5,164.5 L284.5,170.5 M280.5,163.5 L280.5,170.5 M288.5,166.5 L295.5,166.5 L295.5,164.5 L294.5,163.5 L289.5,163.5 L288.5,164.5 L288.5,168.5 L289.5,170.5 L294.5,170.5" stroke="#A00000" stroke-width="1" fill="none" stroke-linecap="square" stroke-linejoin="miter"/>
<circle cx="376.5" cy="219.5" r="2.0" stroke="#A00000" stroke-width="1" fill="none"/>
<circle cx="376.5" cy="286.5" r="2.0" stroke="#A00000" stroke-width="1" fill="none"/>
<line x1="376.5" y1="219.5" x2="376.5" y2="246.5" stroke="#A00000" stroke-width="1"/>
<line x1="376.5" y1="256.5" x2="376.5" y2="286.5" stroke="#A00000" stroke-width="1"/>
<rect x="359.0" y="245.5" width="35.0" height="2" fill="#A00000"/>
<rect x="359.0" y="255.5" width="35.0" height="2" fill="#A00000"/>
<path d="M368.0,286.5 L385.0,286.5 L376.5,294.5 Z" stroke="#A00000" stroke-width="1" fill="none"/>
<path d="M392.5,232.5 L391.5,232.5 L387.5,232.5 L386.5,232.5 L386.5,239.5 L387.5,240.5 L391.5,240.5 L392.5,239.5 M395.5,232.5 L396.5,232.5 L401.5,232.5 L402.5,232.5 L402.5,234.5 L399.5,236.5 L399.5,237.5 M399.5,239.5 L399.5,240.5" stroke="#00A0A0" stroke-width="1" fill="none" stroke-linecap="square" stroke-linejoin="miter"/>
<path d="M390.5,272.5 L390.5,264.5 L385.5,269.5 L385.5,270.5 L391.5,270.5 M394.5,264.5 L400.5,264.5 L396.5,272.5 M404.5,264.5 L409.5,264.5 L410.5,265.5 L410.5,271.5 L409.5,272.5 L404.5,272.5 L403.5,271.5 L403.5,265.5 L404.5,264.5 M410.5,265.5 L403.5,271.5 M413.5,272.5 L413.5,267.5 L418.5,267.5 L419.5,268.5 L419.5,272.5" stroke="#00A0A0" stroke-width="1" fill="none" stroke-linecap="square" stroke-linejoin="miter"/>
<circle cx="376.5" cy="219.5" r="2.0" stroke="#A00000" stroke-width="1" fill="none"/>
<circle cx="460.5" cy="219.5" r="2.0" stroke="#A00000" stroke-width="1" fill="none"/>
<line x1="376.5" y1="219.5" x2="393.5" y2="219.5" stroke="#A00000" stroke-width="1"/>
<line x1="442.5" y1="219.5" x2="460.5" y2="219.5" stroke="#A00000" stroke-width="1"/>
<rect x="393.5" y="212.5" width="49" height="13" stroke="#A00000" fill="none"/>
<path d="M406.5,216.5 L407.5,215.5 L411.5,215.5 L412.5,216.5 L412.5,219.5 L411.5,219.5 L407.5,219.5 L406.5,220.5 L406.5,223.5 L412.5,223.5 M415.5,216.5 L416.5,215.5 L420.5,215.5 L421.5,216.5 L421.5,219.5 L420.5,219.5 L416.5,219.5 L415.5,220.5 L415.5,223.5 L421.5,223.5 M425.5,215.5 L425.5,223.5 M431.5,218.5 L425.5,221.5 M427.5,220.5 L431.5,223.5" stroke="#00A0A0" stroke-width="1" fill="none" stroke-linecap="square" stroke-linejoin="miter"/>
<path d="M410.5,237.5 L410.5,229.5 L415.5,229.5 L416.5,229.5 L416.5,232.5 L415.5,233.5 L410.5,233.5 M413.5,233.5 L416.5,237.5 M419.5,229.5 L420.5,229.5 L424.5,229.5 L425.5,229.5 L425.5,231.5 L422.5,233.5 L422.5,234.5 M422.5,236.5 L422.5,237.5" stroke="#00A0A0" stroke-width="1" fill="none" stroke-linecap="square" stroke-linejoin="miter"/>
<circle cx="460.5" cy="219.5" r="2.0" stroke="#A00000" stroke-width="1" fill="none"/>
<line x1="460.5" y1="219.5" x2="460.5" y2="212.5" stroke="#A00000" stroke-width="1"/>
<path d="M460.5,206 L466,212 L455,212 Z" fill="#A00000" stroke="#A00000" stroke-width="0.6"/>
<path d="M456.5,201.5 L459.5,201.5 M457.5,199.5 L457.5,202.5 M461.5,203.5 L461.5,199.5 L462.5,198.5 L464.5,198.5 L465.5,199.5 L465.5,203.5 M461.5,201.5 L465.5,201.5" stroke="#00A0A0" stroke-width="1.2" fill="none" stroke-linecap="square" stroke-linejoin="miter"/>
<path d="M485.5,219.5 A33,33 0 0 1 551.5,219.5 L551.5,252.5 A33,33 0 0 1 485.5,252.5 Z" stroke="#A00000" fill="none"/>
<circle cx="518.5" cy="169.5" r="2.0" stroke="#A00000" stroke-width="1" fill="none"/>
<line x1="518.5" y1="169.5" x2="518.5" y2="202.5" stroke="#A00000" stroke-width="1"/>
<line x1="501.5" y1="202.5" x2="535.5" y2="202.5" stroke="#A00000" stroke-width="1"/>
<path d="M510.5,179.5 L510.5,176.5 L510.5,175.5 L512.5,175.5 L513.5,176.5 L513.5,179.5 L512.5,180.5 L510.5,180.5 L510.5,179.5 M513.5,179.5 L514.5,180.5 L516.5,180.5 L517.5,179.5 L517.5,176.5 L516.5,175.5 L514.5,175.5 L513.5,176.5" stroke="#A00000" stroke-width="1" fill="none" stroke-linecap="square" stroke-linejoin="miter"/>
<path d="M521.5,194.5 L517.5,194.5 L516.5,195.5 L516.5,198.5 L517.5,199.5 L521.5,199.5" stroke="#00A0A0" stroke-width="1" fill="none" stroke-linecap="square" stroke-linejoin="miter"/>
<circle cx="468.5" cy="236.5" r="2.0" stroke="#A00000" stroke-width="1" fill="none"/>
<line x1="468.5" y1="236.5" x2="539.5" y2="236.5" stroke="#A00000" stroke-width="1"/>
<path d="M479.5,230.5 L478.5,231.5 L475.5,231.5 L474.5,230.5 L474.5,228.5 L475.5,227.5 L478.5,227.5 L479.5,228.5 L479.5,232.5 L477.5,234.5 L475.5,234.5" stroke="#A00000" stroke-width="1" fill="none" stroke-linecap="square" stroke-linejoin="miter"/>
<path d="M493.5,232.5 L493.5,240.5 M496.5,232.5 L496.5,240.5 M491.5,235.5 L497.5,235.5 M491.5,237.5 L497.5,237.5 M507.5,232.5 L501.5,232.5 L501.5,240.5 L507.5,240.5 M501.5,236.5 L505.5,236.5 M516.5,233.5 L515.5,232.5 L511.5,232.5 L510.5,233.5 L510.5,239.5 L511.5,240.5 L515.5,240.5 L516.5,239.5 M519.5,232.5 L519.5,240.5 M525.5,232.5 L525.5,240.5 M519.5,236.5 L525.5,236.5 M529.5,232.5 L533.5,232.5 L534.5,233.5 L534.5,235.5 L533.5,236.5 L529.5,236.5 L528.5,235.5 L528.5,233.5 L529.5,232.5 M529.5,236.5 L528.5,237.5 L528.5,239.5 L529.5,240.5 L533.5,240.5 L534.5,239.5 L534.5,237.5 L533.5,236.5 M538.5,233.5 L540.5,232.5 L540.5,240.5 M538.5,240.5 L542.5,240.5" stroke="#00A0A0" stroke-width="1" fill="none" stroke-linecap="square" stroke-linejoin="miter"/>
<path d="M507.5,232.5 L501.5,232.5 L501.5,240.5 L507.5,240.5 M501.5,236.5 L505.5,236.5 M516.5,233.5 L515.5,232.5 L511.5,232.5 L510.5,233.5 L510.5,239.5 L511.5,240.5 L515.5,240.5 L516.5,239.5 M519.5,232.5 L519.5,240.5 M525.5,232.5 L525.5,240.5 M519.5,236.5 L525.5,236.5 M530.5,232.5 L534.5,232.5 L535.5,233.5 L535.5,235.5 L534.5,236.5 L530.5,236.5 L529.5,235.5 L529.5,233.5 L530.5,232.5 M530.5,236.5 L529.5,237.5 L529.5,239.5 L530.5,240.5 L534.5,240.5 L535.5,239.5 L535.5,237.5 L534.5,236.5 M539.5,233.5 L541.5,232.5 L541.5,240.5 M539.5,240.5 L543.5,240.5" stroke="#00A0A0" stroke-width="1" fill="none" stroke-linecap="square" stroke-linejoin="miter"/>
<path d="M501.5,278.5 A17.5,17.5 0 0 1 535.5,270" stroke="#A00000" fill="none"/>
<path d="M499.5,276.5 L506.5,276.5 M499.5,271.5 L504.5,276.5 M502.5,275.5 L506.5,271.5" stroke="#00A0A0" stroke-width="1" fill="none" stroke-linecap="square" stroke-linejoin="miter"/>
<line x1="501.5" y1="277.5" x2="501.5" y2="302.5" stroke="#A00000" stroke-width="1"/>
<circle cx="501.5" cy="302.5" r="2.0" stroke="#A00000" stroke-width="1" fill="none"/>
<path d="M493.0,302.5 L510.0,302.5 L501.5,310.5 Z" stroke="#A00000" stroke-width="1" fill="none"/>
<path d="M493.5,297.5 L493.5,292.5 L496.5,294.5 L496.5,293.5 L496.5,292.5 L499.5,292.5 L500.5,293.5 L500.5,296.5 L499.5,297.5" stroke="#A00000" stroke-width="1" fill="none" stroke-linecap="square" stroke-linejoin="miter"/>
<path d="M435.5,160.5 L443.5,165.5 L435.5,170.5 M446.5,163.5 L450.5,170.5 L453.5,163.5 M457.5,163.5 L463.5,163.5 L464.5,164.5 L464.5,170.5 L458.5,170.5 L457.5,168.5 L457.5,167.5 L458.5,166.5 L464.5,166.5 M469.5,160.5 L471.5,160.5 L471.5,170.5 L473.5,170.5 M478.5,163.5 L478.5,168.5 L479.5,170.5 L484.5,170.5 L485.5,168.5 L485.5,163.5 M489.5,166.5 L496.5,166.5 L496.5,164.5 L495.5,163.5 L490.5,163.5 L489.5,164.5 L489.5,168.5 L490.5,170.5 L495.5,170.5" stroke="#A00000" stroke-width="1" fill="none" stroke-linecap="square" stroke-linejoin="miter"/>
<path d="M437.5,177.5 L444.5,182.5 L437.5,187.5 M447.5,187.5 L447.5,180.5 L453.5,180.5 L455.5,181.5 L455.5,187.5 M459.5,180.5 L464.5,180.5 L465.5,181.5 L465.5,187.5 L459.5,187.5 L458.5,185.5 L458.5,184.5 L459.5,183.5 L465.5,183.5 M469.5,187.5 L469.5,180.5 L475.5,180.5 L476.5,181.5 L476.5,187.5 M472.5,180.5 L472.5,187.5 M480.5,183.5 L487.5,183.5 L487.5,181.5 L486.5,180.5 L481.5,180.5 L480.5,181.5 L480.5,185.5 L481.5,187.5 L486.5,187.5" stroke="#A00000" stroke-width="1" fill="none" stroke-linecap="square" stroke-linejoin="miter"/>
<circle cx="435.5" cy="252.5" r="2.0" stroke="#A00000" stroke-width="1" fill="none"/>
<circle cx="435.5" cy="319.5" r="2.0" stroke="#A00000" stroke-width="1" fill="none"/>
<line x1="435.5" y1="252.5" x2="435.5" y2="280.5" stroke="#A00000" stroke-width="1"/>
<line x1="435.5" y1="290.5" x2="435.5" y2="319.5" stroke="#A00000" stroke-width="1"/>
<rect x="418.0" y="279.5" width="35.0" height="2" fill="#A00000"/>
<rect x="418.0" y="289.5" width="35.0" height="2" fill="#A00000"/>
<path d="M450.5,266.5 L449.5,266.5 L445.5,266.5 L444.5,266.5 L444.5,273.5 L445.5,274.5 L449.5,274.5 L450.5,273.5 M453.5,266.5 L454.5,266.5 L459.5,266.5 L460.5,266.5 L460.5,268.5 L457.5,270.5 L457.5,271.5 M457.5,273.5 L457.5,274.5" stroke="#00A0A0" stroke-width="1" fill="none" stroke-linecap="square" stroke-linejoin="miter"/>
<path d="M450.5,308.5 L450.5,300.5 L446.5,305.5 L446.5,305.5 L452.5,305.5 M455.5,300.5 L461.5,300.5 L457.5,308.5 M464.5,309.5 L464.5,302.5 L469.5,302.5 L470.5,303.5 L470.5,307.5 L469.5,308.5 L464.5,308.5" stroke="#00A0A0" stroke-width="1" fill="none" stroke-linecap="square" stroke-linejoin="miter"/>
<circle cx="468.5" cy="236.5" r="2.0" stroke="#A00000" stroke-width="1" fill="none"/>
<circle cx="468.5" cy="319.5" r="2.0" stroke="#A00000" stroke-width="1" fill="none"/>
<line x1="468.5" y1="236.5" x2="468.5" y2="252.5" stroke="#A00000" stroke-width="1"/>
<line x1="468.5" y1="301.5" x2="468.5" y2="319.5" stroke="#A00000" stroke-width="1"/>
<rect x="461.5" y="252.5" width="13" height="49" stroke="#A00000" fill="none"/>
<path d="M465.5,288.5 L465.5,282.5 L468.5,285.5 L468.5,283.5 L469.5,282.5 L472.5,282.5 L473.5,283.5 L473.5,287.5 L472.5,288.5 M465.5,279.5 L465.5,273.5 L468.5,276.5 L468.5,274.5 L469.5,273.5 L472.5,273.5 L473.5,274.5 L473.5,278.5 L472.5,279.5 M465.5,269.5 L473.5,269.5 M467.5,263.5 L470.5,269.5 M469.5,267.5 L473.5,263.5" stroke="#00A0A0" stroke-width="1" fill="none" stroke-linecap="square" stroke-linejoin="miter"/>
<path d="M486.5,283.5 L478.5,283.5 L478.5,278.5 L478.5,277.5 L481.5,277.5 L482.5,278.5 L482.5,283.5 M482.5,280.5 L486.5,277.5 M478.5,274.5 L478.5,273.5 L478.5,269.5 L478.5,268.5 L480.5,268.5 L482.5,271.5 L483.5,271.5 M485.5,271.5 L486.5,271.5" stroke="#00A0A0" stroke-width="1" fill="none" stroke-linecap="square" stroke-linejoin="miter"/>
<path d="M460.0,319.5 L477.0,319.5 L468.5,327.5 Z" stroke="#A00000" stroke-width="1" fill="none"/>
<circle cx="518.5" cy="119.5" r="2.0" stroke="#A00000" stroke-width="1" fill="none"/>
<circle cx="601.5" cy="119.5" r="2.0" stroke="#A00000" stroke-width="1" fill="none"/>
<line x1="518.5" y1="119.5" x2="535.5" y2="119.5" stroke="#A00000" stroke-width="1"/>
<line x1="584.5" y1="119.5" x2="601.5" y2="119.5" stroke="#A00000" stroke-width="1"/>
<rect x="535.5" y="112.5" width="49" height="13" stroke="#A00000" fill="none"/>
<path d="M548.5,115.5 L554.5,115.5 L551.5,119.5 L553.5,119.5 L554.5,119.5 L554.5,122.5 L553.5,123.5 L549.5,123.5 L548.5,122.5 M557.5,115.5 L563.5,115.5 L560.5,119.5 L562.5,119.5 L563.5,119.5 L563.5,122.5 L562.5,123.5 L558.5,123.5 L557.5,122.5 M567.5,115.5 L567.5,123.5 M573.5,118.5 L567.5,121.5 M569.5,120.5 L573.5,123.5" stroke="#00A0A0" stroke-width="1" fill="none" stroke-linecap="square" stroke-linejoin="miter"/>
<path d="M552.5,137.5 L552.5,129.5 L557.5,129.5 L558.5,129.5 L558.5,132.5 L557.5,133.5 L552.5,133.5 M555.5,133.5 L558.5,137.5 M561.5,129.5 L562.5,129.5 L566.5,129.5 L567.5,129.5 L567.5,131.5 L564.5,133.5 L564.5,134.5 M564.5,136.5 L564.5,137.5" stroke="#00A0A0" stroke-width="1" fill="none" stroke-linecap="square" stroke-linejoin="miter"/>
<circle cx="601.5" cy="119.5" r="2.0" stroke="#A00000" stroke-width="1" fill="none"/>
<line x1="601.5" y1="119.5" x2="601.5" y2="112.5" stroke="#A00000" stroke-width="1"/>
<path d="M601.5,106 L607,112 L596,112 Z" fill="#A00000" stroke="#A00000" stroke-width="0.6"/>
<path d="M597.5,101.5 L600.5,101.5 M598.5,99.5 L598.5,102.5 M602.5,103.5 L602.5,99.5 L603.5,98.5 L605.5,98.5 L606.5,99.5 L606.5,103.5 M602.5,101.5 L606.5,101.5" stroke="#00A0A0" stroke-width="1.2" fill="none" stroke-linecap="square" stroke-linejoin="miter"/>
<circle cx="518.5" cy="169.5" r="2.0" stroke="#A00000" stroke-width="1" fill="none"/>
<circle cx="585.5" cy="169.5" r="2.0" stroke="#A00000" stroke-width="1" fill="none"/>
<line x1="518.5" y1="169.5" x2="546.5" y2="169.5" stroke="#A00000" stroke-width="1"/>
<line x1="556.5" y1="169.5" x2="585.5" y2="169.5" stroke="#A00000" stroke-width="1"/>
<rect x="545.5" y="152.0" width="2" height="35.0" fill="#A00000"/>
<rect x="555.5" y="152.0" width="2" height="35.0" fill="#A00000"/>
<path d="M540.5,208.5 L532.5,208.5 L537.5,212.5 L538.5,212.5 L538.5,206.5 M532.5,203.5 L532.5,197.5 L540.5,201.5 M532.5,193.5 L532.5,189.5 L533.5,188.5 L539.5,188.5 L540.5,189.5 L540.5,193.5 L539.5,194.5 L533.5,194.5 L532.5,193.5 M533.5,188.5 L539.5,194.5 M542.5,185.5 L535.5,185.5 L535.5,180.5 L536.5,179.5 L539.5,179.5 L540.5,180.5 L540.5,185.5" stroke="#00A0A0" stroke-width="1" fill="none" stroke-linecap="square" stroke-linejoin="miter"/>
<path d="M565.5,189.5 L564.5,190.5 L564.5,194.5 L565.5,195.5 L571.5,195.5 L572.5,194.5 L572.5,190.5 L571.5,189.5 M565.5,186.5 L564.5,185.5 L564.5,181.5 L565.5,180.5 L567.5,180.5 L569.5,183.5 L570.5,183.5 M572.5,183.5 L572.5,183.5" stroke="#00A0A0" stroke-width="1" fill="none" stroke-linecap="square" stroke-linejoin="miter"/>
<circle cx="751.5" cy="227.5" r="2.0" stroke="#A00000" stroke-width="1" fill="none"/>
<circle cx="751.5" cy="294.5" r="2.0" stroke="#A00000" stroke-width="1" fill="none"/>
<line x1="751.5" y1="227.5" x2="751.5" y2="255.5" stroke="#A00000" stroke-width="1"/>
<line x1="751.5" y1="265.5" x2="751.5" y2="294.5" stroke="#A00000" stroke-width="1"/>
<rect x="734.0" y="254.5" width="35.0" height="2" fill="#A00000"/>
<rect x="734.0" y="264.5" width="35.0" height="2" fill="#A00000"/>
<path d="M768.5,241.5 L767.5,240.5 L763.5,240.5 L762.5,241.5 L762.5,247.5 L763.5,248.5 L767.5,248.5 L768.5,247.5" stroke="#00A0A0" stroke-width="1" fill="none" stroke-linecap="square" stroke-linejoin="miter"/>
<path d="M768.5,274.5 L767.5,274.5 L763.5,274.5 L762.5,274.5 L762.5,281.5 L763.5,282.5 L767.5,282.5 L768.5,281.5" stroke="#00A0A0" stroke-width="1" fill="none" stroke-linecap="square" stroke-linejoin="miter"/>
<circle cx="793.5" cy="211.5" r="2.0" stroke="#A00000" stroke-width="1" fill="none"/>
<circle cx="793.5" cy="311.5" r="2.0" stroke="#A00000" stroke-width="1" fill="none"/>
<line x1="793.5" y1="211.5" x2="793.5" y2="228.5" stroke="#A00000" stroke-width="1"/>
<line x1="793.5" y1="294.5" x2="793.5" y2="311.5" stroke="#A00000" stroke-width="1"/>
<path d="M793.5,228.5 A8.25,8.25 0 0 0 793.5,245.0 A8.25,8.25 0 0 0 793.5,261.5 A8.25,8.25 0 0 0 793.5,278.0 A8.25,8.25 0 0 0 793.5,294.5" stroke="#A00000" stroke-width="1.2" fill="none"/>
<path d="M773.5,288.5 L773.5,285.5 M773.5,287.5 L780.5,287.5 M780.5,288.5 L780.5,285.5 M780.5,282.5 L773.5,282.5 L780.5,277.5 L773.5,277.5 M773.5,274.5 L773.5,271.5 L775.5,269.5 L778.5,269.5 L780.5,271.5 L780.5,274.5 L773.5,274.5 M773.5,267.5 L779.5,267.5 L780.5,266.5 L780.5,262.5 L779.5,262.5 L773.5,262.5 M774.5,254.5 L773.5,255.5 L773.5,258.5 L774.5,259.5 L779.5,259.5 L780.5,258.5 L780.5,255.5 L779.5,254.5 M773.5,252.5 L773.5,247.5 M773.5,249.5 L780.5,249.5 M773.5,243.5 L773.5,240.5 L774.5,239.5 L779.5,239.5 L780.5,240.5 L780.5,243.5 L779.5,244.5 L774.5,244.5 L773.5,243.5 M780.5,237.5 L773.5,237.5 L773.5,232.5 L774.5,232.5 L776.5,232.5 L777.5,232.5 L777.5,237.5 M777.5,234.5 L780.5,232.5" stroke="#00A0A0" stroke-width="1" fill="none" stroke-linecap="square" stroke-linejoin="miter"/>
<path d="M798.5,268.5 L805.5,268.5 L805.5,263.5 M799.5,260.5 L798.5,259.5 L798.5,256.5 L799.5,255.5 L800.5,255.5 L802.5,258.5 L803.5,258.5 M805.5,258.5 L805.5,258.5" stroke="#00A0A0" stroke-width="1" fill="none" stroke-linecap="square" stroke-linejoin="miter"/>
<path d="M787,318 L799,318 L793.5,324.5 Z" fill="#A00000" stroke="#A00000" stroke-width="0.6"/>
<line x1="793.5" y1="311.5" x2="793.5" y2="318.5" stroke="#A00000" stroke-width="1"/>
<path d="M788.5,329.5 L792.5,329.5 M790.5,327.5 L790.5,331.5 M794.5,332.5 L794.5,328.5 L796.5,327.5 L797.5,327.5 L799.5,328.5 L799.5,332.5 M794.5,329.5 L799.5,329.5" stroke="#00A0A0" stroke-width="1.2" fill="none" stroke-linecap="square" stroke-linejoin="miter"/>
<circle cx="918.5" cy="77.5" r="2.0" stroke="#A00000" stroke-width="1" fill="none"/>
<circle cx="918.5" cy="161.5" r="2.0" stroke="#A00000" stroke-width="1" fill="none"/>
<line x1="918.5" y1="77.5" x2="918.5" y2="94.5" stroke="#A00000" stroke-width="1"/>
<line x1="918.5" y1="143.5" x2="918.5" y2="161.5" stroke="#A00000" stroke-width="1"/>
<rect x="911.5" y="94.5" width="13" height="49" stroke="#A00000" fill="none"/>
<path d="M916.5,124.5 L915.5,122.5 L923.5,122.5 M923.5,124.5 L923.5,120.5 M923.5,116.5 L915.5,116.5 L919.5,113.5 L915.5,110.5 L923.5,110.5" stroke="#00A0A0" stroke-width="1" fill="none" stroke-linecap="square" stroke-linejoin="miter"/>
<path d="M909.5,125.5 L901.5,125.5 L901.5,120.5 L901.5,119.5 L904.5,119.5 L905.5,120.5 L905.5,125.5 M905.5,122.5 L909.5,119.5 M901.5,116.5 L901.5,115.5 L901.5,111.5 L901.5,110.5 L903.5,110.5 L905.5,113.5 L906.5,113.5 M908.5,113.5 L909.5,113.5" stroke="#00A0A0" stroke-width="1" fill="none" stroke-linecap="square" stroke-linejoin="miter"/>
<g transform="translate(1826,0) scale(-1,1)"></g>
<circle cx="918.5" cy="161.5" r="2.0" stroke="#A00000" stroke-width="1" fill="none"/>
<circle cx="985.5" cy="161.5" r="2.0" stroke="#A00000" stroke-width="1" fill="none"/>
<line x1="918.5" y1="161.5" x2="946.5" y2="161.5" stroke="#A00000" stroke-width="1"/>
<line x1="956.5" y1="161.5" x2="985.5" y2="161.5" stroke="#A00000" stroke-width="1"/>
<rect x="945.5" y="144.0" width="2" height="35.0" fill="#A00000"/>
<rect x="955.5" y="144.0" width="2" height="35.0" fill="#A00000"/>
<path d="M985.5,152.5 L985.5,170.5 L994.5,161.5 Z" stroke="#A00000" fill="none"/>
<path d="M932.5,203.5 L931.5,201.5 L939.5,201.5 M939.5,203.5 L939.5,199.5 M931.5,194.5 L931.5,190.5 L932.5,189.5 L938.5,189.5 L939.5,190.5 L939.5,194.5 L938.5,195.5 L932.5,195.5 L931.5,194.5 M932.5,189.5 L938.5,195.5 M931.5,185.5 L931.5,180.5 L932.5,179.5 L938.5,179.5 L939.5,180.5 L939.5,185.5 L938.5,186.5 L932.5,186.5 L931.5,185.5 M932.5,179.5 L938.5,186.5 M939.5,176.5 L934.5,176.5 L934.5,171.5 L935.5,170.5 L939.5,170.5" stroke="#00A0A0" stroke-width="1" fill="none" stroke-linecap="square" stroke-linejoin="miter"/>
<path d="M965.5,181.5 L964.5,182.5 L964.5,186.5 L965.5,187.5 L971.5,187.5 L972.5,186.5 L972.5,182.5 L971.5,181.5 M965.5,178.5 L964.5,177.5 L964.5,173.5 L965.5,172.5 L967.5,172.5 L969.5,175.5 L970.5,175.5 M972.5,175.5 L972.5,175.5" stroke="#00A0A0" stroke-width="1" fill="none" stroke-linecap="square" stroke-linejoin="miter"/>
<circle cx="918.5" cy="211.5" r="2.0" stroke="#A00000" stroke-width="1" fill="none"/>
<circle cx="918.5" cy="311.5" r="2.0" stroke="#A00000" stroke-width="1" fill="none"/>
<line x1="918.5" y1="211.5" x2="918.5" y2="228.5" stroke="#A00000" stroke-width="1"/>
<line x1="918.5" y1="294.5" x2="918.5" y2="311.5" stroke="#A00000" stroke-width="1"/>
<path d="M918.5,228.5 A8.25,8.25 0 0 1 918.5,245.0 A8.25,8.25 0 0 1 918.5,261.5 A8.25,8.25 0 0 1 918.5,278.0 A8.25,8.25 0 0 1 918.5,294.5" stroke="#A00000" stroke-width="1.2" fill="none"/>
<path d="M906.5,268.5 L913.5,268.5 L913.5,263.5 M907.5,260.5 L906.5,259.5 L906.5,256.5 L907.5,255.5 L908.5,255.5 L910.5,258.5 L911.5,258.5 M913.5,258.5 L913.5,258.5" stroke="#00A0A0" stroke-width="1" fill="none" stroke-linecap="square" stroke-linejoin="miter"/>
<path d="M931.5,288.5 L931.5,285.5 M931.5,287.5 L938.5,287.5 M938.5,288.5 L938.5,285.5 M938.5,282.5 L931.5,282.5 L938.5,277.5 L931.5,277.5 M931.5,274.5 L931.5,271.5 L933.5,269.5 L936.5,269.5 L938.5,271.5 L938.5,274.5 L931.5,274.5 M931.5,267.5 L937.5,267.5 L938.5,266.5 L938.5,262.5 L937.5,262.5 L931.5,262.5 M932.5,254.5 L931.5,255.5 L931.5,258.5 L932.5,259.5 L937.5,259.5 L938.5,258.5 L938.5,255.5 L937.5,254.5 M931.5,252.5 L931.5,247.5 M931.5,249.5 L938.5,249.5 M931.5,243.5 L931.5,240.5 L932.5,239.5 L937.5,239.5 L938.5,240.5 L938.5,243.5 L937.5,244.5 L932.5,244.5 L931.5,243.5 M938.5,237.5 L931.5,237.5 L931.5,232.5 L932.5,232.5 L934.5,232.5 L935.5,232.5 L935.5,237.5 M935.5,234.5 L938.5,232.5" stroke="#00A0A0" stroke-width="1" fill="none" stroke-linecap="square" stroke-linejoin="miter"/>
<circle cx="968.5" cy="227.5" r="2.0" stroke="#A00000" stroke-width="1" fill="none"/>
<circle cx="968.5" cy="294.5" r="2.0" stroke="#A00000" stroke-width="1" fill="none"/>
<line x1="968.5" y1="227.5" x2="968.5" y2="256.5" stroke="#A00000" stroke-width="1"/>
<line x1="968.5" y1="266.5" x2="968.5" y2="294.5" stroke="#A00000" stroke-width="1"/>
<rect x="951.0" y="255.5" width="35.0" height="2" fill="#A00000"/>
<rect x="951.0" y="265.5" width="35.0" height="2" fill="#A00000"/>
<path d="M983.5,241.5 L982.5,240.5 L978.5,240.5 L977.5,241.5 L977.5,247.5 L978.5,248.5 L982.5,248.5 L983.5,247.5 M986.5,241.5 L987.5,240.5 L992.5,240.5 L993.5,241.5 L993.5,243.5 L990.5,245.5 L990.5,246.5 M990.5,248.5 L990.5,248.5" stroke="#00A0A0" stroke-width="1" fill="none" stroke-linecap="square" stroke-linejoin="miter"/>
<path d="M980.5,274.5 L979.5,274.5 L975.5,274.5 L974.5,274.5 L974.5,281.5 L975.5,282.5 L979.5,282.5 L980.5,281.5" stroke="#00A0A0" stroke-width="1" fill="none" stroke-linecap="square" stroke-linejoin="miter"/>
<circle cx="1101.5" cy="136.5" r="2.0" stroke="#A00000" stroke-width="1" fill="none"/>
<circle cx="1101.5" cy="211.5" r="2.0" stroke="#A00000" stroke-width="1" fill="none"/>
<line x1="1101.5" y1="136.5" x2="1101.5" y2="152.5" stroke="#A00000" stroke-width="1"/>
<line x1="1101.5" y1="201.5" x2="1101.5" y2="211.5" stroke="#A00000" stroke-width="1"/>
<rect x="1094.5" y="152.5" width="13" height="49" stroke="#A00000" fill="none"/>
<path d="M1099.5,182.5 L1098.5,180.5 L1106.5,180.5 M1106.5,182.5 L1106.5,178.5 M1098.5,174.5 L1106.5,174.5 M1098.5,168.5 L1103.5,174.5 M1101.5,172.5 L1106.5,168.5" stroke="#00A0A0" stroke-width="1" fill="none" stroke-linecap="square" stroke-linejoin="miter"/>
<path d="M1119.5,183.5 L1111.5,183.5 L1111.5,178.5 L1111.5,177.5 L1114.5,177.5 L1115.5,178.5 L1115.5,183.5 M1115.5,180.5 L1119.5,177.5 M1111.5,174.5 L1111.5,173.5 L1111.5,169.5 L1111.5,168.5 L1113.5,168.5 L1115.5,171.5 L1116.5,171.5 M1118.5,171.5 L1119.5,171.5" stroke="#00A0A0" stroke-width="1" fill="none" stroke-linecap="square" stroke-linejoin="miter"/>
<circle cx="1101.5" cy="127.5" r="3.5" stroke="#A00000" stroke-width="1" fill="none"/>
<path d="M1101.5,125.5 L1101.5,121.5 M1099.5,123.5 L1103.5,123.5 M1104.5,119.5 L1100.5,119.5 L1099.5,117.5 L1099.5,116.5 L1100.5,114.5 L1104.5,114.5 M1101.5,119.5 L1101.5,114.5" stroke="#00A0A0" stroke-width="1.2" fill="none" stroke-linecap="square" stroke-linejoin="miter"/>
<line x1="1101.5" y1="131.5" x2="1101.5" y2="136.5" stroke="#A00000" stroke-width="1"/>
<circle cx="1101.5" cy="219.5" r="2.0" stroke="#A00000" stroke-width="1" fill="none"/>
<circle cx="1101.5" cy="211.5" r="2.0" stroke="#A00000" stroke-width="1" fill="none"/>
<circle cx="1101.5" cy="311.5" r="2.0" stroke="#A00000" stroke-width="1" fill="none"/>
<line x1="1101.5" y1="211.5" x2="1101.5" y2="228.5" stroke="#A00000" stroke-width="1"/>
<line x1="1101.5" y1="294.5" x2="1101.5" y2="311.5" stroke="#A00000" stroke-width="1"/>
<path d="M1101.5,228.5 A8.25,8.25 0 0 1 1101.5,245.0 A8.25,8.25 0 0 1 1101.5,261.5 A8.25,8.25 0 0 1 1101.5,278.0 A8.25,8.25 0 0 1 1101.5,294.5" stroke="#A00000" stroke-width="1.2" fill="none"/>
<path d="M1089.5,268.5 L1096.5,268.5 L1096.5,263.5 M1090.5,260.5 L1089.5,259.5 L1089.5,256.5 L1090.5,255.5 L1091.5,255.5 L1093.5,258.5 L1094.5,258.5 M1096.5,258.5 L1096.5,258.5" stroke="#00A0A0" stroke-width="1" fill="none" stroke-linecap="square" stroke-linejoin="miter"/>
<path d="M1114.5,288.5 L1114.5,285.5 M1114.5,287.5 L1121.5,287.5 M1121.5,288.5 L1121.5,285.5 M1121.5,282.5 L1114.5,282.5 L1121.5,277.5 L1114.5,277.5 M1114.5,274.5 L1114.5,271.5 L1116.5,269.5 L1119.5,269.5 L1121.5,271.5 L1121.5,274.5 L1114.5,274.5 M1114.5,267.5 L1120.5,267.5 L1121.5,266.5 L1121.5,262.5 L1120.5,262.5 L1114.5,262.5 M1115.5,254.5 L1114.5,255.5 L1114.5,258.5 L1115.5,259.5 L1120.5,259.5 L1121.5,258.5 L1121.5,255.5 L1120.5,254.5 M1114.5,252.5 L1114.5,247.5 M1114.5,249.5 L1121.5,249.5 M1114.5,243.5 L1114.5,240.5 L1115.5,239.5 L1120.5,239.5 L1121.5,240.5 L1121.5,243.5 L1120.5,244.5 L1115.5,244.5 L1114.5,243.5 M1121.5,237.5 L1114.5,237.5 L1114.5,232.5 L1115.5,232.5 L1117.5,232.5 L1118.5,232.5 L1118.5,237.5 M1118.5,234.5 L1121.5,232.5" stroke="#00A0A0" stroke-width="1" fill="none" stroke-linecap="square" stroke-linejoin="miter"/>
<circle cx="1051.5" cy="244.5" r="2.0" stroke="#A00000" stroke-width="1" fill="none"/>
<circle cx="1051.5" cy="311.5" r="2.0" stroke="#A00000" stroke-width="1" fill="none"/>
<line x1="1051.5" y1="244.5" x2="1051.5" y2="271.5" stroke="#A00000" stroke-width="1"/>
<line x1="1051.5" y1="281.5" x2="1051.5" y2="311.5" stroke="#A00000" stroke-width="1"/>
<rect x="1034.0" y="270.5" width="35.0" height="2" fill="#A00000"/>
<rect x="1034.0" y="280.5" width="35.0" height="2" fill="#A00000"/>
<path d="M1066.5,258.5 L1065.5,257.5 L1061.5,257.5 L1060.5,258.5 L1060.5,264.5 L1061.5,265.5 L1065.5,265.5 L1066.5,264.5 M1069.5,258.5 L1070.5,257.5 L1075.5,257.5 L1076.5,258.5 L1076.5,260.5 L1073.5,262.5 L1073.5,263.5 M1073.5,265.5 L1073.5,265.5" stroke="#00A0A0" stroke-width="1" fill="none" stroke-linecap="square" stroke-linejoin="miter"/>
<path d="M1071.5,291.5 L1070.5,290.5 L1066.5,290.5 L1065.5,291.5 L1065.5,297.5 L1066.5,298.5 L1070.5,298.5 L1071.5,297.5" stroke="#00A0A0" stroke-width="1" fill="none" stroke-linecap="square" stroke-linejoin="miter"/>
<circle cx="1201.5" cy="211.5" r="2.0" stroke="#A00000" stroke-width="1" fill="none"/>
<circle cx="1201.5" cy="311.5" r="2.0" stroke="#A00000" stroke-width="1" fill="none"/>
<line x1="1201.5" y1="211.5" x2="1201.5" y2="228.5" stroke="#A00000" stroke-width="1"/>
<line x1="1201.5" y1="294.5" x2="1201.5" y2="311.5" stroke="#A00000" stroke-width="1"/>
<path d="M1201.5,228.5 A8.25,8.25 0 0 1 1201.5,245.0 A8.25,8.25 0 0 1 1201.5,261.5 A8.25,8.25 0 0 1 1201.5,278.0 A8.25,8.25 0 0 1 1201.5,294.5" stroke="#A00000" stroke-width="1.2" fill="none"/>
<path d="M1189.5,268.5 L1196.5,268.5 L1196.5,263.5 M1190.5,260.5 L1189.5,259.5 L1189.5,256.5 L1190.5,255.5 L1191.5,255.5 L1193.5,258.5 L1194.5,258.5 M1196.5,258.5 L1196.5,258.5" stroke="#00A0A0" stroke-width="1" fill="none" stroke-linecap="square" stroke-linejoin="miter"/>
<path d="M1214.5,288.5 L1214.5,285.5 M1214.5,287.5 L1221.5,287.5 M1221.5,288.5 L1221.5,285.5 M1221.5,282.5 L1214.5,282.5 L1221.5,277.5 L1214.5,277.5 M1214.5,274.5 L1214.5,271.5 L1216.5,269.5 L1219.5,269.5 L1221.5,271.5 L1221.5,274.5 L1214.5,274.5 M1214.5,267.5 L1220.5,267.5 L1221.5,266.5 L1221.5,262.5 L1220.5,262.5 L1214.5,262.5 M1215.5,254.5 L1214.5,255.5 L1214.5,258.5 L1215.5,259.5 L1220.5,259.5 L1221.5,258.5 L1221.5,255.5 L1220.5,254.5 M1214.5,252.5 L1214.5,247.5 M1214.5,249.5 L1221.5,249.5 M1214.5,243.5 L1214.5,240.5 L1215.5,239.5 L1220.5,239.5 L1221.5,240.5 L1221.5,243.5 L1220.5,244.5 L1215.5,244.5 L1214.5,243.5 M1221.5,237.5 L1214.5,237.5 L1214.5,232.5 L1215.5,232.5 L1217.5,232.5 L1218.5,232.5 L1218.5,237.5 M1218.5,234.5 L1221.5,232.5" stroke="#00A0A0" stroke-width="1" fill="none" stroke-linecap="square" stroke-linejoin="miter"/>
<line x1="1201.5" y1="311.5" x2="1201.5" y2="327.5" stroke="#A00000" stroke-width="1"/>
<path d="M1192.5,327.5 L1210.5,327.5 L1201.5,336.5 Z" stroke="#A00000" stroke-width="1" fill="none"/>
<path d="M1027.5,397 A33,33 0 0 1 1093.5,397 L1093.5,443 A33,33 0 0 1 1027.5,443 Z" stroke="#A00000" fill="none"/>
<line x1="1060.5" y1="319.5" x2="1060.5" y2="386.5" stroke="#A00000" stroke-width="1"/>
<line x1="1051.5" y1="386.5" x2="1069.5" y2="386.5" stroke="#A00000" stroke-width="1"/>
<path d="M1042.5,356.5 L1042.5,348.5 L1047.5,348.5 L1048.5,348.5 L1048.5,351.5 L1047.5,352.5 L1042.5,352.5 M1051.5,356.5 L1051.5,349.5 L1053.5,348.5 L1055.5,348.5 L1057.5,349.5 L1057.5,356.5 M1051.5,352.5 L1057.5,352.5" stroke="#A00000" stroke-width="1" fill="none" stroke-linecap="square" stroke-linejoin="miter"/>
<path d="M1077.5,328.5 L1080.5,336.5 L1083.5,328.5 M1086.5,328.5 L1087.5,328.5 L1092.5,328.5 L1093.5,328.5 L1093.5,330.5 L1090.5,332.5 L1090.5,333.5 M1090.5,335.5 L1090.5,336.5" stroke="#00A0A0" stroke-width="1" fill="none" stroke-linecap="square" stroke-linejoin="miter"/>
<path d="M1078.5,353.5 L1078.5,345.5 L1083.5,345.5 L1084.5,345.5 L1084.5,348.5 L1083.5,349.5 L1078.5,349.5 M1093.5,345.5 L1087.5,345.5 L1087.5,353.5 L1093.5,353.5 M1087.5,349.5 L1091.5,349.5 M1096.5,353.5 L1096.5,345.5 L1102.5,353.5 L1102.5,345.5 M1105.5,345.5 L1111.5,345.5 M1108.5,345.5 L1108.5,353.5 M1115.5,345.5 L1120.5,345.5 L1121.5,345.5 L1121.5,352.5 L1120.5,353.5 L1115.5,353.5 L1114.5,352.5 L1114.5,345.5 L1115.5,345.5 M1124.5,345.5 L1128.5,345.5 L1130.5,346.5 L1130.5,351.5 L1128.5,353.5 L1124.5,353.5 L1124.5,345.5 M1139.5,345.5 L1133.5,345.5 L1133.5,353.5 L1139.5,353.5 M1133.5,349.5 L1137.5,349.5 M1142.5,349.5 L1148.5,349.5 M1145.5,346.5 L1145.5,351.5" stroke="#00A0A0" stroke-width="1" fill="none" stroke-linecap="square" stroke-linejoin="miter"/>
<path d="M1109.5,351.5 L1112.5,350.5 L1112.5,358.5 M1109.5,358.5 L1114.5,358.5 M1124.5,350.5 L1118.5,350.5 L1118.5,353.5 L1123.5,353.5 L1124.5,354.5 L1124.5,357.5 L1123.5,358.5 L1118.5,358.5 M1128.5,350.5 L1132.5,350.5 L1133.5,350.5 L1133.5,357.5 L1132.5,358.5 L1128.5,358.5 L1127.5,357.5 L1127.5,350.5 L1128.5,350.5 M1133.5,350.5 L1127.5,357.5 M1136.5,358.5 L1136.5,352.5 L1141.5,352.5 L1142.5,353.5 L1142.5,358.5 M1151.5,350.5 L1145.5,350.5 L1145.5,358.5 M1145.5,354.5 L1149.5,354.5" stroke="#00A0A0" stroke-width="1" fill="none" stroke-linecap="square" stroke-linejoin="miter"/>
<path d="M1038.5,398 L1038.5,401.5 L1081.5,401.5 L1081.5,398" stroke="#A00000" fill="none" stroke-dasharray="0"/>
<rect x="1043" y="401" width="5" height="1" fill="#fff"/>
<rect x="1056" y="401" width="5" height="1" fill="#fff"/>
<rect x="1069" y="401" width="5" height="1" fill="#fff"/>
<path d="M1081.5,401.5 L1085.5,407.5 L1085.5,446.5 L1081.5,451.5" stroke="#A00000" stroke-width="1" fill="none"/>
<line x1="1038.5" y1="415.5" x2="1043.5" y2="419.5" stroke="#A00000" stroke-width="1"/>
<line x1="1043" y1="419.5" x2="1077" y2="419.5" stroke="#A00000" stroke-dasharray="7,5"/>
<line x1="1081.5" y1="415.5" x2="1077.5" y2="419.5" stroke="#A00000" stroke-width="1"/>
<line x1="1077.5" y1="419.5" x2="1118.5" y2="419.5" stroke="#A00000" stroke-width="1"/>
<circle cx="1118.5" cy="419.5" r="2.0" stroke="#A00000" stroke-width="1" fill="none"/>
<path d="M1108.5,408.5 L1107.5,408.5 L1103.5,408.5 L1102.5,408.5 L1102.5,415.5 L1103.5,416.5 L1107.5,416.5 L1108.5,415.5 L1108.5,412.5 L1105.5,412.5 M1111.5,408.5 L1112.5,408.5 L1117.5,408.5 L1118.5,408.5 L1118.5,411.5 L1117.5,412.5 L1112.5,412.5 L1111.5,413.5 L1111.5,416.5 L1118.5,416.5" stroke="#A00000" stroke-width="1" fill="none" stroke-linecap="square" stroke-linejoin="miter"/>
<line x1="1038" y1="436.5" x2="1082" y2="436.5" stroke="#A00000" stroke-dasharray="7,6"/>
<line x1="993.5" y1="436.5" x2="1025.5" y2="436.5" stroke="#A00000" stroke-width="1"/>
<path d="M1010.5,425.5 L1009.5,424.5 L1005.5,424.5 L1004.5,425.5 L1004.5,431.5 L1005.5,432.5 L1009.5,432.5 L1010.5,431.5 L1010.5,428.5 L1007.5,428.5 M1014.5,425.5 L1017.5,424.5 L1017.5,432.5 M1014.5,432.5 L1019.5,432.5" stroke="#A00000" stroke-width="1" fill="none" stroke-linecap="square" stroke-linejoin="miter"/>
<path d="M1038.5,455.5 L1043.5,451.5 L1081.5,451.5 L1092.5,462.5 L1092.5,502.5" stroke="#A00000" stroke-width="1" fill="none"/>
<path d="M1084.5,502.5 L1100.5,502.5 L1092.5,511.5 Z" stroke="#A00000" stroke-width="1" fill="none"/>
<path d="M1052.5,489.5 L1052.5,481.5 L1058.5,481.5 L1059.5,482.5 L1059.5,485.5 L1058.5,485.5 L1052.5,485.5 M1062.5,481.5 L1062.5,489.5 M1068.5,481.5 L1062.5,486.5 M1064.5,485.5 L1068.5,489.5 M1077.5,481.5 L1071.5,489.5 M1086.5,482.5 L1085.5,481.5 L1081.5,481.5 L1080.5,482.5 L1080.5,488.5 L1081.5,489.5 L1085.5,489.5 L1086.5,488.5 L1086.5,485.5 L1083.5,485.5 M1089.5,481.5 L1095.5,481.5 L1092.5,485.5 L1094.5,485.5 L1095.5,485.5 L1095.5,488.5 L1094.5,489.5 L1090.5,489.5 L1089.5,488.5" stroke="#A00000" stroke-width="1" fill="none" stroke-linecap="square" stroke-linejoin="miter"/>
<circle cx="1160.5" cy="336.5" r="2.0" stroke="#A00000" stroke-width="1" fill="none"/>
<circle cx="1160.5" cy="336.5" r="2.0" stroke="#A00000" stroke-width="1" fill="none"/>
<circle cx="1160.5" cy="402.5" r="2.0" stroke="#A00000" stroke-width="1" fill="none"/>
<line x1="1160.5" y1="336.5" x2="1160.5" y2="363.5" stroke="#A00000" stroke-width="1"/>
<line x1="1160.5" y1="373.5" x2="1160.5" y2="402.5" stroke="#A00000" stroke-width="1"/>
<rect x="1143.5" y="362.5" width="34" height="2" fill="#A00000"/>
<rect x="1143.5" y="372.5" width="34" height="2" fill="#A00000"/>
<path d="M1141.5,382.5 L1140.5,382.5 L1136.5,382.5 L1135.5,382.5 L1135.5,389.5 L1136.5,390.5 L1140.5,390.5 L1141.5,389.5 M1144.5,382.5 L1145.5,382.5 L1150.5,382.5 L1151.5,382.5 L1151.5,384.5 L1148.5,386.5 L1148.5,387.5 M1148.5,389.5 L1148.5,390.5" stroke="#00A0A0" stroke-width="1" fill="none" stroke-linecap="square" stroke-linejoin="miter"/>
<circle cx="1160.5" cy="419.5" r="2.0" stroke="#A00000" stroke-width="1" fill="none"/>
<circle cx="1160.5" cy="486.5" r="2.0" stroke="#A00000" stroke-width="1" fill="none"/>
<line x1="1160.5" y1="419.5" x2="1160.5" y2="447.5" stroke="#A00000" stroke-width="1"/>
<line x1="1160.5" y1="457.5" x2="1160.5" y2="486.5" stroke="#A00000" stroke-width="1"/>
<rect x="1143.5" y="446.5" width="34" height="2" fill="#A00000"/>
<rect x="1143.5" y="456.5" width="34" height="2" fill="#A00000"/>
<path d="M1152.0,486.5 L1169.0,486.5 L1160.5,494.5 Z" stroke="#A00000" stroke-width="1" fill="none"/>
<path d="M1176.5,432.5 L1175.5,432.5 L1171.5,432.5 L1170.5,432.5 L1170.5,439.5 L1171.5,440.5 L1175.5,440.5 L1176.5,439.5 M1179.5,432.5 L1180.5,432.5 L1185.5,432.5 L1186.5,432.5 L1186.5,434.5 L1183.5,436.5 L1183.5,437.5 M1183.5,439.5 L1183.5,440.5" stroke="#00A0A0" stroke-width="1" fill="none" stroke-linecap="square" stroke-linejoin="miter"/>
<path d="M1169.5,465.5 L1176.5,465.5 L1173.5,469.5 L1175.5,469.5 L1176.5,469.5 L1176.5,472.5 L1175.5,473.5 L1170.5,473.5 L1169.5,472.5 M1179.5,465.5 L1185.5,465.5 L1182.5,469.5 L1184.5,469.5 L1185.5,469.5 L1185.5,472.5 L1184.5,473.5 L1180.5,473.5 L1179.5,472.5 M1189.5,465.5 L1193.5,465.5 L1194.5,466.5 L1194.5,472.5 L1193.5,473.5 L1189.5,473.5 L1188.5,472.5 L1188.5,466.5 L1189.5,465.5 M1194.5,466.5 L1188.5,472.5 M1197.5,475.5 L1197.5,468.5 L1202.5,468.5 L1203.5,469.5 L1203.5,472.5 L1202.5,473.5 L1197.5,473.5 M1212.5,465.5 L1206.5,465.5 L1206.5,473.5 M1206.5,469.5 L1210.5,469.5" stroke="#00A0A0" stroke-width="1" fill="none" stroke-linecap="square" stroke-linejoin="miter"/>
<circle cx="1118.5" cy="419.5" r="2.0" stroke="#A00000" stroke-width="1" fill="none"/>
<circle cx="1118.5" cy="502.5" r="2.0" stroke="#A00000" stroke-width="1" fill="none"/>
<line x1="1118.5" y1="419.5" x2="1118.5" y2="436.5" stroke="#A00000" stroke-width="1"/>
<line x1="1118.5" y1="485.5" x2="1118.5" y2="502.5" stroke="#A00000" stroke-width="1"/>
<rect x="1111.5" y="436.5" width="13" height="49" stroke="#A00000" fill="none"/>
<path d="M1116.5,471.5 L1115.5,469.5 L1123.5,469.5 M1123.5,471.5 L1123.5,467.5 M1115.5,462.5 L1115.5,458.5 L1115.5,457.5 L1122.5,457.5 L1123.5,458.5 L1123.5,462.5 L1122.5,463.5 L1115.5,463.5 L1115.5,462.5 M1115.5,457.5 L1122.5,463.5 M1115.5,453.5 L1123.5,453.5 M1115.5,447.5 L1120.5,453.5 M1118.5,451.5 L1123.5,447.5" stroke="#00A0A0" stroke-width="1" fill="none" stroke-linecap="square" stroke-linejoin="miter"/>
<path d="M1136.5,467.5 L1128.5,467.5 L1128.5,462.5 L1128.5,461.5 L1131.5,461.5 L1132.5,462.5 L1132.5,467.5 M1132.5,464.5 L1136.5,461.5 M1128.5,458.5 L1128.5,457.5 L1128.5,453.5 L1128.5,452.5 L1130.5,452.5 L1132.5,455.5 L1133.5,455.5 M1135.5,455.5 L1136.5,455.5" stroke="#00A0A0" stroke-width="1" fill="none" stroke-linecap="square" stroke-linejoin="miter"/>
<line x1="1118.5" y1="502.5" x2="1118.5" y2="508.5" stroke="#A00000" stroke-width="1"/>
<circle cx="1118.5" cy="511.5" r="3.5" stroke="#A00000" stroke-width="1" fill="none"/>
<path d="M1110.5,518.5 L1114.5,518.5 M1112.5,516.5 L1112.5,520.5 M1120.5,516.5 L1116.5,516.5 L1116.5,518.5 L1120.5,518.5 L1120.5,518.5 L1120.5,520.5 L1120.5,521.5 L1116.5,521.5 M1123.5,516.5 L1125.5,521.5 L1127.5,516.5" stroke="#00A0A0" stroke-width="1.2" fill="none" stroke-linecap="square" stroke-linejoin="miter"/>
<line x1="1006.5" y1="693.5" x2="1030.5" y2="693.5" stroke="#000" stroke-width="1"/>
<line x1="1018.5" y1="681.5" x2="1018.5" y2="705.5" stroke="#000" stroke-width="1"/>
</g>
</svg>
<div id="info" class="abs">
<div style="left:17px;top:-2px;color:#005A66">Ref
#PWR?</div>
<div style="left:160px;top:-2px;color:#005A66">Pwr Symb
Antenne</div>
<div style="left:448px;top:-2px;color:#858500">RefLib
-5V</div>
<div style="left:640px;top:-2px;color:#7A0000">Lib
power</div>
</div>
<div id="status" class="abs">
<div class="fld" style="left:2px;width:781px">Eingelesen: /home/stu/kicad/pfl200.sch</div>
<div class="fld" style="left:786px;width:57px;letter-spacing:0.3px">Z 6</div>
<div class="fld" style="left:846px;width:136px;letter-spacing:0.9px">X 6,3500  Y 5,2500</div>
<div class="fld" style="left:985px;width:137px;letter-spacing:1.3px">x 0,5000  y 1,1170</div>
<div class="fld" style="left:1125px;width:47px;letter-spacing:0.8px">Zoll</div>
<div class="fld" style="left:1175px;width:97px"></div>
</div>
</body></html>
